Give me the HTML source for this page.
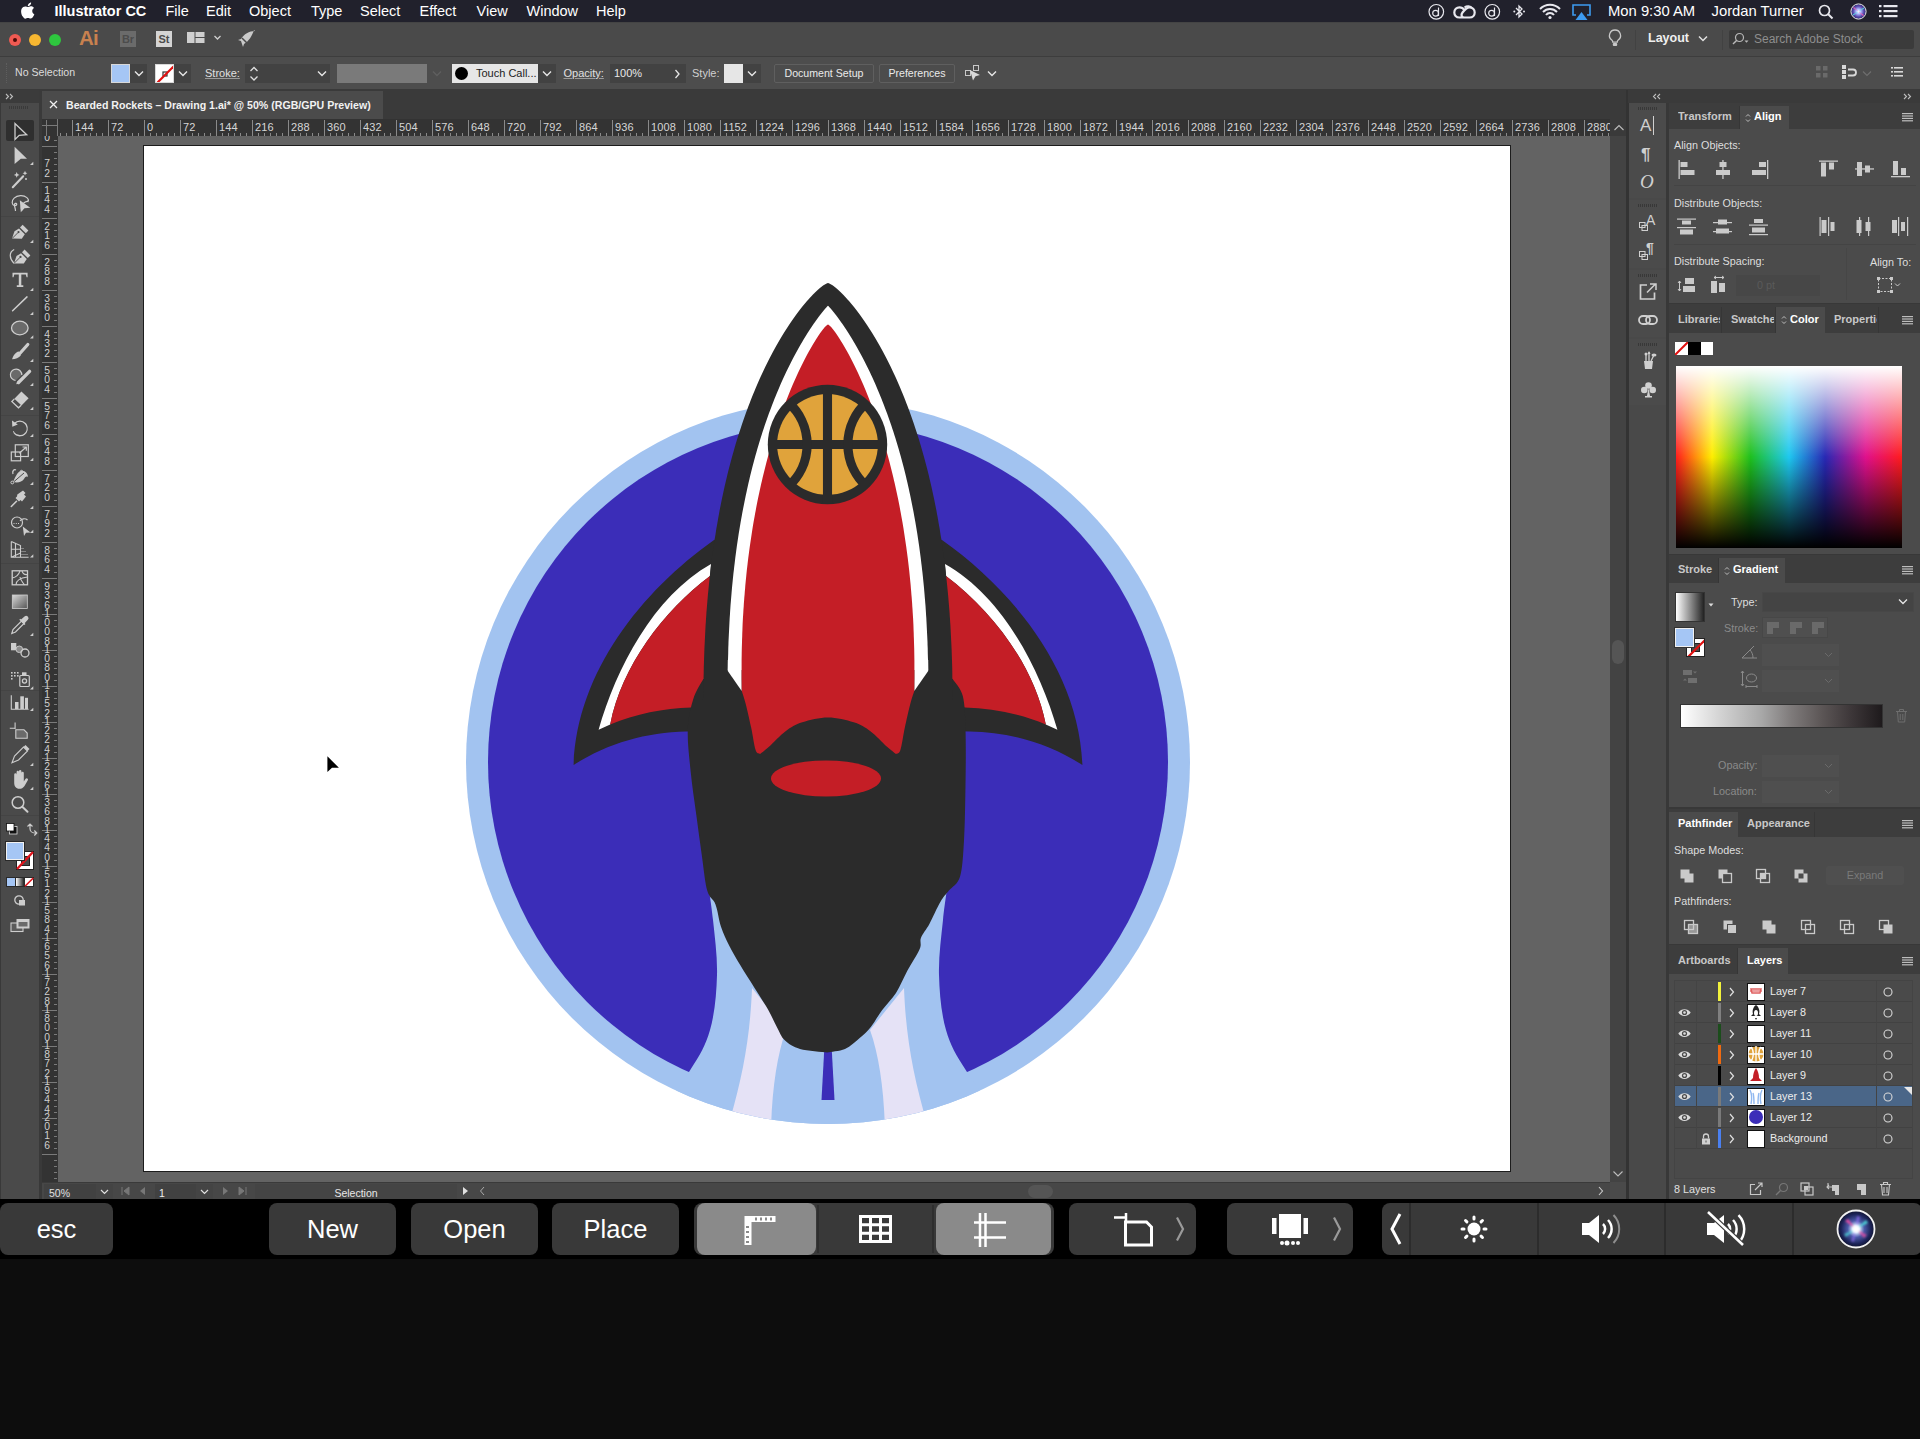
<!DOCTYPE html>
<html><head><meta charset="utf-8"><title>Illustrator</title>
<style>

*{margin:0;padding:0;box-sizing:border-box}
html,body{width:1920px;height:1439px;overflow:hidden;background:#0d0d0d;font-family:"Liberation Sans",sans-serif;position:relative}
.a{position:absolute}
svg{position:absolute;overflow:visible}

.mb{top:0;height:22px;line-height:22px;font-size:14.5px;color:#fff;white-space:nowrap}

.cb{line-height:14px;white-space:nowrap}
.dd{background:#424242}
.btn{border:1px solid #5f5f5f;border-radius:2px;background:#4c4c4c;color:#eaeaea;font-size:10.6px;line-height:17px;text-align:center;white-space:nowrap}

.rl{top:121px;font-size:11px;line-height:13px;color:#d6d6d6;white-space:nowrap;letter-spacing:0.1px}
.vl{left:43px;width:8px;text-align:center;font-size:10.3px;line-height:9.5px;color:#d0d0d0}

.pt{font-size:10.8px;line-height:13px;color:#dedede;white-space:nowrap}
.tab{font-size:11px;line-height:13px;font-weight:bold;white-space:nowrap}

.sb{top:1186.5px;font-size:10.5px;line-height:13px;color:#e0e0e0;white-space:nowrap}

.tb{top:1203px;height:52px;border-radius:8px;color:#fff;font-size:25.5px;line-height:52px;text-align:center;white-space:nowrap}

</style></head><body>
<div class="a" style="left:0;top:0;width:1920px;height:22px;background:#21212c"></div>
<div class="a mb" style="left:54.5px;font-weight:bold;">Illustrator CC</div>
<div class="a mb" style="left:165.5px;">File</div>
<div class="a mb" style="left:206px;">Edit</div>
<div class="a mb" style="left:249px;">Object</div>
<div class="a mb" style="left:311px;">Type</div>
<div class="a mb" style="left:360px;">Select</div>
<div class="a mb" style="left:419.5px;">Effect</div>
<div class="a mb" style="left:476.5px;">View</div>
<div class="a mb" style="left:526.5px;">Window</div>
<div class="a mb" style="left:596px;">Help</div>
<div class="a mb" style="left:1608px;font-size:14.8px">Mon 9:30 AM</div>
<div class="a mb" style="left:1711.5px;font-size:14.8px">Jordan Turner</div>
<svg style="left:20px;top:2px" width="15" height="17" viewBox="0 0 15 17"><path d="M12.2 9.1c0-2 1.7-3 1.8-3.1-1-1.4-2.5-1.6-3-1.7-1.3-.1-2.5.8-3.1.8-.7 0-1.7-.8-2.7-.7C3.800 4.400 2.500 5.200 1.800 6.400.4 8.900 1.400 12.600 2.800 14.600c.7 1 1.500 2.100 2.500 2.100 1 0 1.400-.7 2.700-.7s1.600.7 2.700.6c1.100 0 1.800-1 2.500-2 .8-1.100 1.100-2.200 1.100-2.300-.1 0-2.100-.8-2.100-3.200zM10.200 3.100c.6-.7 1-1.600.9-2.600-.8 0-1.800.6-2.400 1.300-.5.6-1 1.600-.9 2.500.9.1 1.800-.5 2.400-1.200z" fill="#fff"/></svg>
<svg style="left:1428px;top:4px" width="17" height="16"><circle cx="8.3" cy="7.8" r="7.3" fill="none" stroke="#e8e8ee" stroke-width="1.2"/><circle cx="7.6" cy="9.2" r="2.9" fill="none" stroke="#e8e8ee" stroke-width="1.2"/><path d="M10.5 3.5v8.5" stroke="#e8e8ee" stroke-width="1.2"/></svg>
<svg style="left:1453px;top:4px" width="23" height="16"><path d="M6.500 13.500C3 13.500 1.300 11 1.300 8.500 1.300 5.500 3.500 3.300 6.500 3.300 9.500 3.300 11.500 6 11.500 6M16.500 13.500C20 13.500 21.700 11 21.700 8.500 21.700 5.500 19.500 3.300 16.500 3.300 13.500 3.300 11 6.500 9.500 8.500 8 10.500 8 13.500 11.500 13.500H16.500M6.500 13.500H11.500" fill="none" stroke="#e8e8ee" stroke-width="2.200"/><path d="M11.500 3.500C14 1.500 17.500 2 19 4" fill="none" stroke="#e8e8ee" stroke-width="2"/></svg>
<svg style="left:1484px;top:4px" width="17" height="16"><circle cx="8.3" cy="7.8" r="7.3" fill="none" stroke="#e8e8ee" stroke-width="1.2"/><circle cx="7.6" cy="9.2" r="2.9" fill="none" stroke="#e8e8ee" stroke-width="1.2"/><path d="M10.5 3.5v8.5" stroke="#e8e8ee" stroke-width="1.2"/></svg>
<svg style="left:1513px;top:3px" width="13" height="17"><path d="M3 5l6 6-3 3V3l3 3-6 6" fill="none" stroke="#e8e8ee" stroke-width="1.3"/><circle cx="1.3" cy="8.5" r="1" fill="#e8e8ee"/><circle cx="11" cy="8.500" r="1" fill="#e8e8ee"/></svg>
<svg style="left:1539px;top:3px" width="22" height="16"><path d="M1 6a14 14 0 0 1 20 0M4 9a9.500 9.500 0 0 1 14 0M7 12a5 5 0 0 1 8 0" fill="none" stroke="#e8e8ee" stroke-width="2"/><circle cx="11" cy="14.500" r="1.600" fill="#e8e8ee"/></svg>
<svg style="left:1572px;top:4px" width="19" height="16"><path d="M4 11H1V1h17v10h-3" fill="none" stroke="#3d9bf0" stroke-width="1.6"/><path d="M9.5 8l6 8h-12z" fill="#3d9bf0"/></svg>
<svg style="left:1818px;top:4px" width="16" height="16"><circle cx="6.500" cy="6.500" r="5" fill="none" stroke="#e8e8ee" stroke-width="1.700"/><path d="M10 10l4.500 4.500" stroke="#e8e8ee" stroke-width="2"/></svg>
<svg style="left:1850px;top:3px" width="17" height="17"><defs><radialGradient id="sg" cx="50%" cy="50%" r="50%"><stop offset="0" stop-color="#fff"/><stop offset=".3" stop-color="#b0c0ff"/><stop offset=".7" stop-color="#5a48b0"/><stop offset="1" stop-color="#30306a"/></radialGradient></defs><circle cx="8.5" cy="8.5" r="7.6" fill="url(#sg)" stroke="#e8e8e8" stroke-width="1"/><path d="M8.5 8.5L3 5 4 4zM8.5 8.5L14 12 13 13z" fill="#ff5fb0" opacity=".8"/><path d="M8.5 8.5L13.5 4.500 14.500 5.500zM8.5 8.5L3.500 12.500 2.500 11.500z" fill="#50e8e0" opacity=".8"/></svg>
<svg style="left:1879px;top:4px" width="19" height="15"><g fill="#e8e8ee"><rect x="0" y="1" width="2.500" height="2.200"/><rect x="0" y="6" width="2.500" height="2.200"/><rect x="0" y="11" width="2.500" height="2.200"/><rect x="4.500" y="1" width="14" height="2.200"/><rect x="4.500" y="6" width="14" height="2.200"/><rect x="4.500" y="11" width="14" height="2.200"/></g></svg><div class="a" style="left:0;top:22px;width:1920px;height:34px;background:#4a4a4a;border-top:1px solid #444"></div>
<div class="a" style="left:8.7px;top:33.7px;width:12.6px;height:12.6px;border-radius:50%;background:#f05a52"></div>
<div class="a" style="left:13px;top:38px;width:4px;height:4px;border-radius:50%;background:#4a0a08"></div>
<div class="a" style="left:28.7px;top:33.7px;width:12.6px;height:12.6px;border-radius:50%;background:#f7b731"></div>
<div class="a" style="left:48.7px;top:33.7px;width:12.6px;height:12.6px;border-radius:50%;background:#2ec63e"></div>
<div class="a" style="left:79px;top:26px;font-size:20.5px;line-height:24px;font-weight:bold;color:#c8814f;letter-spacing:-0.8px">Ai</div>
<div class="a" style="left:120px;top:31px;width:16px;height:16px;background:#6b6b6b;color:#4c4c4c;font-size:11px;font-weight:bold;line-height:16px;text-align:center">Br</div>
<div class="a" style="left:156px;top:31px;width:16px;height:16px;background:#d4d4d4;color:#4c4c4c;font-size:11px;font-weight:bold;line-height:16px;text-align:center">St</div>
<svg style="left:187px;top:32px" width="35" height="12"><g fill="#cfcfcf"><rect x="0" y="0" width="7.500" height="11"/><rect x="8.500" y="0" width="9" height="5"/><rect x="8.500" y="6" width="9" height="5"/></g><path d="M27.500 4l3 3 3-3" fill="none" stroke="#cfcfcf" stroke-width="1.300"/></svg>
<svg style="left:237px;top:30px" width="19" height="18"><path d="M18 1C12 1 7 4 4 9l-3 1 3 1 1 3 1 3 1-3c5-3 8-8 10-14z" fill="#c9c9c9"/><path d="M5 8l6 6" stroke="#4a4a4a" stroke-width="1.500"/></svg>
<svg style="left:1608px;top:29px" width="14" height="19"><path d="M7 1a5.500 5.500 0 0 0-3.200 10c.7.600 1 1.300 1 2.200h4.400c0-.9.300-1.600 1-2.200A5.500 5.500 0 0 0 7 1z" fill="none" stroke="#c8c8c8" stroke-width="1.300"/><rect x="4.800" y="14" width="4.400" height="3" rx="1" fill="#c8c8c8"/></svg>
<div class="a" style="left:1635px;top:30px;width:1px;height:20px;background:#424242"></div>
<div class="a" style="left:1648px;top:30px;font-size:12.5px;line-height:16px;font-weight:bold;color:#efefef">Layout</div>
<svg style="left:1698px;top:35px" width="10" height="7"><path d="M1 1.500l4 4 4-4" fill="none" stroke="#e0e0e0" stroke-width="1.500"/></svg>
<div class="a" style="left:1722px;top:30px;width:1px;height:20px;background:#424242"></div>
<div class="a" style="left:1729px;top:29.5px;width:185px;height:19px;background:#3b3b3b;border-radius:2px"></div>
<svg style="left:1732px;top:32px" width="18" height="14"><circle cx="7.500" cy="5.500" r="4" fill="none" stroke="#b8b8b8" stroke-width="1.200"/><path d="M4.800 8.300L1 12" stroke="#b8b8b8" stroke-width="1.500"/><path d="M12.500 8.500h4l-2 2.200z" fill="#b8b8b8"/></svg>
<div class="a" style="left:1754px;top:31px;font-size:12px;line-height:16px;color:#8e8e8e">Search Adobe Stock</div><div class="a" style="left:0;top:56px;width:1920px;height:34px;background:#4d4d4d;border-top:1px solid #3d3d3d;border-bottom:1px solid #3a3a3a"></div>
<div class="a" style="left:6px;top:63px;width:1px;height:20px;border-left:1px dotted #5e5e5e"></div>
<div class="a cb" style="left:15px;top:65px;font-size:10.6px;color:#dcdcdc">No Selection</div>
<div class="a" style="left:111px;top:64px;width:19px;height:19px;background:#a5c6f5;border:1px solid #d8d8d8"></div>
<div class="a dd" style="left:130px;top:64px;width:17px;height:19px"></div>
<svg style="left:134px;top:70px" width="10" height="7"><path d="M1 1.500l4 4 4-4" fill="none" stroke="#e6e6e6" stroke-width="1.400"/></svg>
<div class="a" style="left:155px;top:64px;width:19px;height:19px;background:#fff;border:1px solid #d8d8d8;overflow:hidden"><svg style="left:0;top:0" width="19" height="19"><rect x="7" y="7" width="4" height="4" fill="none" stroke="#333" stroke-width="1.200"/><path d="M1.500 17.500L17.500 1.500" stroke="#e01010" stroke-width="2.200"/></svg></div>
<div class="a dd" style="left:174px;top:64px;width:17px;height:19px"></div>
<svg style="left:178px;top:70px" width="10" height="7"><path d="M1 1.500l4 4 4-4" fill="none" stroke="#e6e6e6" stroke-width="1.400"/></svg>
<div class="a cb" style="left:205px;top:66px;font-size:11px;color:#e0e0e0;text-decoration:underline;text-decoration-color:#9a9a9a">Stroke:</div>
<div class="a dd" style="left:245px;top:64px;width:18px;height:19px"></div>
<svg style="left:249px;top:66px" width="10" height="16"><path d="M1.500 5l3.500-3.500 3.500 3.500M1.500 10.500l3.500 3.500 3.500-3.500" fill="none" stroke="#dedede" stroke-width="1.300"/></svg>
<div class="a" style="left:263px;top:64px;width:50px;height:19px;background:#424242"></div>
<div class="a dd" style="left:313px;top:64px;width:17px;height:19px"></div>
<svg style="left:317px;top:70px" width="10" height="7"><path d="M1 1.500l4 4 4-4" fill="none" stroke="#e6e6e6" stroke-width="1.400"/></svg>
<div class="a" style="left:337px;top:64px;width:90px;height:19px;background:#7a7a7a"></div>
<svg style="left:432px;top:70px" width="10" height="7"><path d="M1 1.500l4 4 4-4" fill="none" stroke="#5f5f5f" stroke-width="1.400"/></svg>
<div class="a" style="left:452px;top:64px;width:86px;height:19px;background:#e6e6e6"></div>
<div class="a" style="left:455px;top:67px;width:13px;height:13px;border-radius:50%;background:#000"></div>
<div class="a cb" style="left:476px;top:66px;font-size:11px;color:#222">Touch Call...</div>
<div class="a dd" style="left:538px;top:64px;width:18px;height:19px"></div>
<svg style="left:542px;top:70px" width="10" height="7"><path d="M1 1.500l4 4 4-4" fill="none" stroke="#e6e6e6" stroke-width="1.400"/></svg>
<div class="a cb" style="left:563.5px;top:66px;font-size:11px;color:#e0e0e0;text-decoration:underline;text-decoration-color:#9a9a9a">Opacity:</div>
<div class="a" style="left:610px;top:64px;width:58px;height:19px;background:#424242"></div>
<div class="a cb" style="left:614px;top:66px;font-size:11px;color:#e8e8e8">100%</div>
<div class="a dd" style="left:668px;top:64px;width:18px;height:19px"></div>
<svg style="left:674px;top:69px" width="7" height="10"><path d="M1.500 1l3.500 4-3.500 4" fill="none" stroke="#e6e6e6" stroke-width="1.300"/></svg>
<div class="a cb" style="left:692px;top:66px;font-size:11px;color:#d0d0d0">Style:</div>
<div class="a" style="left:724px;top:64px;width:19px;height:19px;background:#e6e6e6"></div>
<div class="a dd" style="left:743px;top:64px;width:18px;height:19px"></div>
<svg style="left:747px;top:70px" width="10" height="7"><path d="M1 1.500l4 4 4-4" fill="none" stroke="#e6e6e6" stroke-width="1.400"/></svg>
<div class="a btn" style="left:774px;top:64px;width:100px;height:19px">Document Setup</div>
<div class="a btn" style="left:879px;top:64px;width:76px;height:19px">Preferences</div>
<svg style="left:964px;top:64px" width="20" height="18"><g fill="none" stroke="#c8c8c8" stroke-width="1"><rect x="1.500" y="6.500" width="5" height="5"/><rect x="9.500" y="1.500" width="5" height="5"/></g><path d="M6 6l10 5-4.500 1.200L9 16.500z" fill="#d8d8d8"/></svg>
<svg style="left:987px;top:70px" width="10" height="7"><path d="M1 1.500l4 4 4-4" fill="none" stroke="#e6e6e6" stroke-width="1.400"/></svg>
<svg style="left:1816px;top:66px" width="12" height="12"><g fill="#6a6a6a"><rect x="0" y="0" width="4.500" height="4.500"/><rect x="7" y="0" width="4.500" height="4.500"/><rect x="0" y="7" width="4.500" height="4.500"/><rect x="7" y="7" width="4.500" height="4.500"/></g></svg>
<svg style="left:1842px;top:65px" width="16" height="15"><g fill="#d8d8d8"><rect x="0" y="0" width="4" height="4"/><rect x="0" y="5" width="4" height="4"/><rect x="0" y="10" width="4" height="4"/></g><path d="M6 4.500h5a3 3 0 0 1 0 6H6" fill="none" stroke="#d8d8d8" stroke-width="1.800"/></svg>
<svg style="left:1862px;top:70px" width="10" height="7"><path d="M1 1.500l4 4 4-4" fill="none" stroke="#6e6e6e" stroke-width="1.200"/></svg>
<svg style="left:1891px;top:67px" width="12" height="11"><g fill="#d8d8d8"><rect x="0" y="0" width="2" height="1.600"/><rect x="0" y="4" width="2" height="1.600"/><rect x="0" y="8" width="2" height="1.600"/><rect x="3" y="0" width="9" height="1.600"/><rect x="3" y="4" width="9" height="1.600"/><rect x="3" y="8" width="9" height="1.600"/></g></svg><div class="a" style="left:0;top:90px;width:42px;height:1110px;background:#393939"></div>
<div class="a" style="left:0;top:90px;width:39px;height:13px;background:#3b3b3b"></div>
<svg style="left:5px;top:93px" width="10" height="7"><path d="M1 1l2.500 2.500L1 6M5 1l2.500 2.500L5 6" fill="none" stroke="#bdbdbd" stroke-width="1.100"/></svg>
<div class="a" style="left:1px;top:103px;width:38px;height:1097px;background:#4a4a4a"></div>
<div class="a" style="left:9px;top:106px;width:20px;height:3px;background:repeating-linear-gradient(90deg,#3a3a3a 0 1px,transparent 1px 2px)"></div>
<div class="a" style="left:6px;top:120px;width:28px;height:21px;background:#2f2f2f;border-radius:2px"></div>
<svg style="left:0;top:0" width="42" height="1200"><path d="M15 123.500V139.500L19.200 135.300 26.700 134.700Z" fill="none" stroke="#cdcdcd" stroke-width="1.300" stroke-linejoin="miter"/><path d="M14.600 146.800V164L20.800 158.750H27Z" fill="#cdcdcd"/><path d="M33.3 165h-3.300l3.300-3.300z" fill="#cdcdcd"/><path d="M12.800 187.200L23.200 176.300" stroke="#cdcdcd" stroke-width="2.100" stroke-linecap="round"/><path d="M16.7 172.1L17.54 174.06 19.5 174.9 17.54 175.74 16.7 177.70000000000002 15.86 175.74 13.899999999999999 174.9 15.86 174.06Z" fill="#cdcdcd"/><path d="M25 170.79999999999998L25.72 172.48 27.4 173.2 25.72 173.92 25 175.6 24.28 173.92 22.6 173.2 24.28 172.48Z" fill="#cdcdcd"/><circle cx="26" cy="179" r="1" fill="#cdcdcd"/><path d="M22 210.500C19 204 27 200.500 28 201.500 29.500 199 26 195.500 20.500 195.700 15 196 11.800 199.500 12.200 202.800 12.600 206 15.500 206 16.500 205 17.500 203.500 15.200 202.500 14.500 204.200 13.800 206 15.800 208.500 15.500 211" fill="none" stroke="#cdcdcd" stroke-width="1.200"/><path d="M19.800 200.300L30.300 207.700 24.500 208.200 20.800 212.300Z" fill="#cdcdcd"/><g transform="translate(0 0)"><path d="M12 238.600L14.500 231.300 19 228.400 24.800 234.200 21.800 238.700Z" fill="#cdcdcd"/><path d="M20 227.400L22.600 224.800 28.400 230.600 25.800 233.200Z" fill="#cdcdcd"/><path d="M12.300 238.300L18 232.600" stroke="#4a4a4a" stroke-width="0.900"/><circle cx="18.500" cy="232.100" r="1.100" fill="#4a4a4a"/></g><path d="M33.3 243h-3.300l3.300-3.300z" fill="#cdcdcd"/><g transform="translate(2 24.8)"><path d="M12 238.600L14.500 231.300 19 228.400 24.800 234.200 21.800 238.700Z" fill="#cdcdcd"/><path d="M20 227.400L22.600 224.800 28.400 230.600 25.800 233.200Z" fill="#cdcdcd"/><path d="M12.300 238.300L18 232.600" stroke="#4a4a4a" stroke-width="0.900"/><circle cx="18.500" cy="232.100" r="1.100" fill="#4a4a4a"/></g><path d="M14.200 249.500C9 252 9 258 14 263.300" fill="none" stroke="#cdcdcd" stroke-width="1.200"/><path d="M12.500 272.800H27.600V277.300H26.600L25.800 274.600H21.300V285.300H23.300V286.900H16.800V285.300H18.800V274.600H14.300L13.500 277.300H12.500Z" fill="#cdcdcd"/><path d="M33.3 291h-3.300l3.300-3.300z" fill="#cdcdcd"/><path d="M12.600 310.700L27 296.900" stroke="#cdcdcd" stroke-width="1.500" stroke-linecap="round"/><path d="M33.3 315h-3.300l3.300-3.300z" fill="#cdcdcd"/><ellipse cx="19.800" cy="328" rx="8.300" ry="6.800" fill="#6a6a6a" stroke="#cdcdcd" stroke-width="1.300"/><path d="M33.3 338.5h-3.300l3.300-3.300z" fill="#cdcdcd"/><path d="M27.800 344.500L19.800 353.500" stroke="#cdcdcd" stroke-width="3.200" stroke-linecap="round"/><path d="M18.800 351.500C15.500 352 13.300 355.500 12 359.300 15.500 359 19 358 20.800 355.500Z" fill="#cdcdcd"/><path d="M33.3 362h-3.300l3.300-3.300z" fill="#cdcdcd"/><path d="M15.500 380.500A5.700 5.700 0 1 1 21.800 375" fill="#6a6a6a" stroke="#cdcdcd" stroke-width="1.200"/><path d="M29.600 371.300L18.500 382.500" stroke="#cdcdcd" stroke-width="3.300" stroke-linecap="round"/><path d="M17.300 381.300L16.200 384.300 19 383.500Z" fill="#cdcdcd"/><path d="M33.3 386h-3.300l3.300-3.300z" fill="#cdcdcd"/><path d="M21.400 391.600L28.600 398.300 21.500 405.500 14.400 398.800Z" fill="#cdcdcd"/><path d="M14.400 398.800L11.800 401.500 18.500 407.800 21.200 405.200" fill="none" stroke="#cdcdcd" stroke-width="1.200"/><path d="M33.3 410h-3.300l3.300-3.300z" fill="#cdcdcd"/><path d="M14.500 423.500A7.300 7.300 0 1 1 13.800 432.500" fill="none" stroke="#cdcdcd" stroke-width="1.300" stroke-dasharray="14 0"/><path d="M13.800 432.500A7.300 7.300 0 0 1 13.500 431" fill="none" stroke="#cdcdcd"/><path d="M12 420.500L17.800 424.500 12.300 426.800Z" fill="#cdcdcd"/><path d="M33.3 437h-3.300l3.300-3.300z" fill="#cdcdcd"/><rect x="11.300" y="452" width="9.300" height="8.800" fill="none" stroke="#cdcdcd" stroke-width="1.200"/><rect x="15.300" y="444.800" width="13" height="11.700" fill="none" stroke="#cdcdcd" stroke-width="1.200"/><path d="M19.300 453.300L26 447.300M22.500 447H26.300V450.800" fill="none" stroke="#cdcdcd" stroke-width="1.200"/><path d="M33.3 461h-3.300l3.300-3.300z" fill="#cdcdcd"/><path d="M13 482C15 478 17 472 21 471 25 470 28 474 28 477 26 476 25 477 24 479 22 482 18 483 13 482Z" fill="#cdcdcd"/><path d="M13 474C12 471 14 469 16 470" fill="none" stroke="#cdcdcd" stroke-width="1.300"/><path d="M11.800 483.500L24 473" stroke="#4a4a4a" stroke-width="1"/><circle cx="12.300" cy="482.500" r="1.400" fill="none" stroke="#cdcdcd" stroke-width="1"/><circle cx="21.500" cy="471.500" r="1.200" fill="none" stroke="#cdcdcd" stroke-width="1"/><path d="M33.3 485h-3.300l3.300-3.300z" fill="#cdcdcd"/><path d="M17.300 494.500L23 490.500 25.500 493 24 494.500 26 496.500 22 501.500 20.500 500 19 501.500 15.500 498 17 496.500Z" fill="#cdcdcd"/><path d="M11.300 506.500L16.500 501.300" stroke="#cdcdcd" stroke-width="1.600" stroke-linecap="round"/><path d="M33.3 509h-3.300l3.300-3.300z" fill="#cdcdcd"/><circle cx="17" cy="522.500" r="5.500" fill="none" stroke="#cdcdcd" stroke-width="1.200"/><path d="M20 521A5 5 0 0 1 27.500 520" fill="none" stroke="#cdcdcd" stroke-width="1.200"/><path d="M13.500 523.500h1M15.800 523.500h1M18 523.500h1" stroke="#cdcdcd" stroke-width="1"/><path d="M22.800 526.500L30.500 532.500 26 532.800 24 536Z" fill="#cdcdcd"/><path d="M33.3 533h-3.300l3.300-3.300z" fill="#cdcdcd"/><path d="M11.300 541.500V557.300H28.600M11.300 541.500L20.500 545.500V557.300M11.300 549.300H20.500M15.500 543V557M11.300 557.300L20.500 553" fill="none" stroke="#cdcdcd" stroke-width="1.100"/><path d="M21 548.500H24M21 551.500H26M21 554.500H28" stroke="#8a8a8a" stroke-width="0.900"/><path d="M33.3 557.5h-3.300l3.300-3.300z" fill="#cdcdcd"/><rect x="12.200" y="570.800" width="15.300" height="14" fill="none" stroke="#cdcdcd" stroke-width="1.300"/><path d="M12.200 578C17 577 19 574 20 570.800M16 584.800C16 580 20 578 27.500 577M20 577C20.500 580 23 583 24.500 584.800M22 571C23 574 25 575 27.500 574.500" fill="none" stroke="#cdcdcd" stroke-width="1.100"/><defs><linearGradient id="tg" x1="0" x2="1" y1="0" y2="1"><stop offset="0" stop-color="#d8d8d8"/><stop offset="1" stop-color="#555"/></linearGradient></defs><rect x="12.300" y="595" width="15" height="13.500" fill="url(#tg)" stroke="#cfcfcf" stroke-width="0.800"/><path d="M11.800 633.500L13 629.500 21.500 621 24 623.500 15.500 632Z" fill="none" stroke="#cdcdcd" stroke-width="1.200"/><path d="M20.500 620L24.500 616.500A2.200 2.200 0 0 1 27.800 619.800L24.200 623.800Z" fill="#cdcdcd"/><path d="M19.800 619.300L25 624.500" stroke="#cdcdcd" stroke-width="1.300"/><path d="M33.3 636h-3.300l3.300-3.300z" fill="#cdcdcd"/><rect x="11" y="643" width="5.300" height="7.300" fill="#cdcdcd"/><circle cx="19.300" cy="649.300" r="3.300" fill="#8a8a8a" stroke="#cdcdcd" stroke-width="0.900"/><circle cx="25" cy="653" r="4" fill="none" stroke="#cdcdcd" stroke-width="1.300"/><rect x="11" y="672" width="1.600" height="1.600" fill="#cdcdcd"/><rect x="11" y="675" width="1.600" height="1.600" fill="#cdcdcd"/><rect x="14" y="672" width="1.600" height="1.600" fill="#cdcdcd"/><rect x="14" y="675" width="1.600" height="1.600" fill="#cdcdcd"/><rect x="17" y="672" width="1.600" height="1.600" fill="#cdcdcd"/><rect x="17" y="675" width="1.600" height="1.600" fill="#cdcdcd"/><rect x="11" y="678" width="1.600" height="1.600" fill="#cdcdcd"/><rect x="19.800" y="675.500" width="9.500" height="11" rx="1" fill="none" stroke="#cdcdcd" stroke-width="1.200"/><circle cx="24.500" cy="681" r="2.100" fill="none" stroke="#cdcdcd" stroke-width="1.300"/><rect x="22" y="672.300" width="4.500" height="3" fill="#cdcdcd"/><path d="M33.3 689.5h-3.300l3.300-3.300z" fill="#cdcdcd"/><path d="M11.300 695.200V709.300H28.600" fill="none" stroke="#cdcdcd" stroke-width="1.100"/><rect x="15" y="702" width="3.500" height="7" fill="#cdcdcd"/><rect x="20.300" y="696.300" width="3.600" height="12.700" fill="#cdcdcd"/><rect x="25" y="697.800" width="3" height="11.200" fill="#cdcdcd"/><path d="M33.3 711h-3.300l3.300-3.300z" fill="#cdcdcd"/><path d="M15.100 722.500V729M9.800 728.200H15.600" stroke="#cdcdcd" stroke-width="1.100"/><path d="M15.800 729.800H24L27.200 733V738.300H15.800Z" fill="#6a6a6a" stroke="#cdcdcd" stroke-width="1.100"/><path d="M12 762.800L14.500 756 23.500 747 27.500 751 18.500 760Z" fill="none" stroke="#cdcdcd" stroke-width="1.100"/><path d="M23.500 747L25.500 745 29.500 749 27.500 751Z" fill="#cdcdcd"/><path d="M33.3 766h-3.300l3.300-3.300z" fill="#cdcdcd"/><path d="M14.200 781V774.500A1.200 1.200 0 0 1 16.600 774.500V779.500 772A1.200 1.200 0 0 1 19 772V779 771.300A1.200 1.200 0 0 1 21.400 771.300V779 773A1.200 1.200 0 0 1 23.800 773V781.500L25.600 778.800A1.300 1.300 0 0 1 27.800 780.200L24.500 786C23 788 21.500 788.800 19.300 788.800 16 788.800 14.200 786 14.200 783Z" fill="#cdcdcd"/><path d="M33.3 790h-3.300l3.300-3.300z" fill="#cdcdcd"/><circle cx="18" cy="802.500" r="5.800" fill="none" stroke="#cdcdcd" stroke-width="1.500"/><path d="M22.300 806.800L27.500 811.800" stroke="#cdcdcd" stroke-width="2" stroke-linecap="round"/></svg>
<svg style="left:5px;top:822px" width="34" height="15"><rect x="4.500" y="4.500" width="7.500" height="7.500" fill="#111" stroke="#ddd" stroke-width="0.800"/><rect x="1.500" y="1.500" width="7.500" height="7.500" fill="#fff" stroke="#111" stroke-width="0.800"/><path d="M22.500 4.500L25 2 27.500 4.500M25 2.300V6.500C25 9 27 11 29.500 11H31.500M29.300 8.500L31.800 11 29.300 13.500" fill="none" stroke="#cdcdcd" stroke-width="1.200"/></svg>
<div class="a" style="left:16px;top:851px;width:18px;height:19px;background:#fff;border:1px solid #222"></div>
<div class="a" style="left:20.500px;top:855.500px;width:9px;height:10px;background:#4a4a4a;border:1px solid #222"></div>
<svg style="left:16px;top:851px" width="18" height="19"><path d="M1 18L17 1" stroke="#e0141c" stroke-width="2.400"/></svg>
<div class="a" style="left:6px;top:842px;width:18px;height:18px;background:#a5c6f5;border:1px solid #f2f2f2;outline:1px solid #2a2a2a"></div>
<div class="a" style="left:7px;top:877.500px;width:7.600px;height:8.300px;background:#a5c6f5;outline:1px solid #2a2a2a"></div>
<div class="a" style="left:16px;top:877.500px;width:7.600px;height:8.300px;background:linear-gradient(90deg,#fff,#222);outline:1px solid #2a2a2a"></div>
<div class="a" style="left:25px;top:877.500px;width:8.300px;height:8.300px;background:#fff;outline:1px solid #2a2a2a"></div>
<svg style="left:25px;top:877.500px" width="9" height="9"><path d="M0 8.300L8.300 0" stroke="#e0141c" stroke-width="1.600"/></svg>
<svg style="left:14px;top:895px" width="12" height="11"><circle cx="5" cy="5" r="4.200" fill="none" stroke="#cdcdcd" stroke-width="1.300"/><rect x="5" y="5" width="6" height="5.500" fill="#cdcdcd"/></svg>
<svg style="left:10px;top:918px" width="21" height="15"><rect x="1" y="5" width="12" height="8.500" fill="#5a5a5a" stroke="#cdcdcd" stroke-width="1.100"/><rect x="6.500" y="1" width="13" height="9.500" fill="#cdcdcd"/><rect x="8.500" y="4" width="9" height="4.500" fill="#6a6a6a"/></svg>
<div class="a" style="left:1px;top:216px;width:38px;height:1px;background:#444"></div>
<div class="a" style="left:1px;top:415px;width:38px;height:1px;background:#444"></div>
<div class="a" style="left:1px;top:563px;width:38px;height:1px;background:#444"></div>
<div class="a" style="left:1px;top:690px;width:38px;height:1px;background:#444"></div>
<div class="a" style="left:1px;top:815px;width:38px;height:1px;background:#444"></div><div class="a" style="left:39px;top:90px;width:1589px;height:29px;background:#3a3a3a"></div>
<div class="a" style="left:42px;top:91px;width:341px;height:28px;background:#4b4b4b"></div>
<svg style="left:49px;top:100px" width="9" height="9"><path d="M1 1l7 7M8 1L1 8" stroke="#f0f0f0" stroke-width="1.300"/></svg>
<div class="a" style="left:66px;top:98px;font-size:10.6px;line-height:14px;font-weight:bold;color:#f2f2f2;white-space:nowrap">Bearded Rockets – Drawing 1.ai* @ 50% (RGB/GPU Preview)</div>
<div class="a" style="left:42px;top:119px;width:1584px;height:17px;background:#333"></div>
<svg style="left:0;top:0" width="1920" height="140"><path d="M60.5 133V136 M66.5 133V136 M72.5 120V136 M78.5 133V136 M84.5 133V136 M90.5 133V136 M96.5 133V136 M102.5 133V136 M108.5 120V136 M114.5 133V136 M120.5 133V136 M126.5 133V136 M132.5 133V136 M138.5 133V136 M144.5 120V136 M150.5 133V136 M156.5 133V136 M162.5 133V136 M168.5 133V136 M174.5 133V136 M180.5 120V136 M186.5 133V136 M192.5 133V136 M198.5 133V136 M204.5 133V136 M210.5 133V136 M216.5 120V136 M222.5 133V136 M228.5 133V136 M234.5 133V136 M240.5 133V136 M246.5 133V136 M252.5 120V136 M258.5 133V136 M264.5 133V136 M270.5 133V136 M276.5 133V136 M282.5 133V136 M288.5 120V136 M294.5 133V136 M300.5 133V136 M306.5 133V136 M312.5 133V136 M318.5 133V136 M324.5 120V136 M330.5 133V136 M336.5 133V136 M342.5 133V136 M348.5 133V136 M354.5 133V136 M360.5 120V136 M366.5 133V136 M372.5 133V136 M378.5 133V136 M384.5 133V136 M390.5 133V136 M396.5 120V136 M402.5 133V136 M408.5 133V136 M414.5 133V136 M420.5 133V136 M426.5 133V136 M432.5 120V136 M438.5 133V136 M444.5 133V136 M450.5 133V136 M456.5 133V136 M462.5 133V136 M468.5 120V136 M474.5 133V136 M480.5 133V136 M486.5 133V136 M492.5 133V136 M498.5 133V136 M504.5 120V136 M510.5 133V136 M516.5 133V136 M522.5 133V136 M528.5 133V136 M534.5 133V136 M540.5 120V136 M546.5 133V136 M552.5 133V136 M558.5 133V136 M564.5 133V136 M570.5 133V136 M576.5 120V136 M582.5 133V136 M588.5 133V136 M594.5 133V136 M600.5 133V136 M606.5 133V136 M612.5 120V136 M618.5 133V136 M624.5 133V136 M630.5 133V136 M636.5 133V136 M642.5 133V136 M648.5 120V136 M654.5 133V136 M660.5 133V136 M666.5 133V136 M672.5 133V136 M678.5 133V136 M684.5 120V136 M690.5 133V136 M696.5 133V136 M702.5 133V136 M708.5 133V136 M714.5 133V136 M720.5 120V136 M726.5 133V136 M732.5 133V136 M738.5 133V136 M744.5 133V136 M750.5 133V136 M756.5 120V136 M762.5 133V136 M768.5 133V136 M774.5 133V136 M780.5 133V136 M786.5 133V136 M792.5 120V136 M798.5 133V136 M804.5 133V136 M810.5 133V136 M816.5 133V136 M822.5 133V136 M828.5 120V136 M834.5 133V136 M840.5 133V136 M846.5 133V136 M852.5 133V136 M858.5 133V136 M864.5 120V136 M870.5 133V136 M876.5 133V136 M882.5 133V136 M888.5 133V136 M894.5 133V136 M900.5 120V136 M906.5 133V136 M912.5 133V136 M918.5 133V136 M924.5 133V136 M930.5 133V136 M936.5 120V136 M942.5 133V136 M948.5 133V136 M954.5 133V136 M960.5 133V136 M966.5 133V136 M972.5 120V136 M978.5 133V136 M984.5 133V136 M990.5 133V136 M996.5 133V136 M1002.5 133V136 M1008.5 120V136 M1014.5 133V136 M1020.5 133V136 M1026.5 133V136 M1032.5 133V136 M1038.5 133V136 M1044.5 120V136 M1050.5 133V136 M1056.5 133V136 M1062.5 133V136 M1068.5 133V136 M1074.5 133V136 M1080.5 120V136 M1086.5 133V136 M1092.5 133V136 M1098.5 133V136 M1104.5 133V136 M1110.5 133V136 M1116.5 120V136 M1122.5 133V136 M1128.5 133V136 M1134.5 133V136 M1140.5 133V136 M1146.5 133V136 M1152.5 120V136 M1158.5 133V136 M1164.5 133V136 M1170.5 133V136 M1176.5 133V136 M1182.5 133V136 M1188.5 120V136 M1194.5 133V136 M1200.5 133V136 M1206.5 133V136 M1212.5 133V136 M1218.5 133V136 M1224.5 120V136 M1230.5 133V136 M1236.5 133V136 M1242.5 133V136 M1248.5 133V136 M1254.5 133V136 M1260.5 120V136 M1266.5 133V136 M1272.5 133V136 M1278.5 133V136 M1284.5 133V136 M1290.5 133V136 M1296.5 120V136 M1302.5 133V136 M1308.5 133V136 M1314.5 133V136 M1320.5 133V136 M1326.5 133V136 M1332.5 120V136 M1338.5 133V136 M1344.5 133V136 M1350.5 133V136 M1356.5 133V136 M1362.5 133V136 M1368.5 120V136 M1374.5 133V136 M1380.5 133V136 M1386.5 133V136 M1392.5 133V136 M1398.5 133V136 M1404.5 120V136 M1410.5 133V136 M1416.5 133V136 M1422.5 133V136 M1428.5 133V136 M1434.5 133V136 M1440.5 120V136 M1446.5 133V136 M1452.5 133V136 M1458.5 133V136 M1464.5 133V136 M1470.5 133V136 M1476.5 120V136 M1482.5 133V136 M1488.5 133V136 M1494.5 133V136 M1500.5 133V136 M1506.5 133V136 M1512.5 120V136 M1518.5 133V136 M1524.5 133V136 M1530.5 133V136 M1536.5 133V136 M1542.5 133V136 M1548.5 120V136 M1554.5 133V136 M1560.5 133V136 M1566.5 133V136 M1572.5 133V136 M1578.5 133V136 M1584.5 120V136 M1590.5 133V136 M1596.5 133V136 M1602.5 133V136 M1608.5 133V136" stroke="#8a8a8a" stroke-width="1"/><path d="M57.5 119V136M42 125.5H57M46.5 120V136" stroke="#7a7a7a" stroke-width="1"/></svg>
<div class="a" style="left:0;top:0;width:1610px;height:136px;overflow:hidden"><div class="a rl" style="left:75px">144</div><div class="a rl" style="left:111px">72</div><div class="a rl" style="left:147px">0</div><div class="a rl" style="left:183px">72</div><div class="a rl" style="left:219px">144</div><div class="a rl" style="left:255px">216</div><div class="a rl" style="left:291px">288</div><div class="a rl" style="left:327px">360</div><div class="a rl" style="left:363px">432</div><div class="a rl" style="left:399px">504</div><div class="a rl" style="left:435px">576</div><div class="a rl" style="left:471px">648</div><div class="a rl" style="left:507px">720</div><div class="a rl" style="left:543px">792</div><div class="a rl" style="left:579px">864</div><div class="a rl" style="left:615px">936</div><div class="a rl" style="left:651px">1008</div><div class="a rl" style="left:687px">1080</div><div class="a rl" style="left:723px">1152</div><div class="a rl" style="left:759px">1224</div><div class="a rl" style="left:795px">1296</div><div class="a rl" style="left:831px">1368</div><div class="a rl" style="left:867px">1440</div><div class="a rl" style="left:903px">1512</div><div class="a rl" style="left:939px">1584</div><div class="a rl" style="left:975px">1656</div><div class="a rl" style="left:1011px">1728</div><div class="a rl" style="left:1047px">1800</div><div class="a rl" style="left:1083px">1872</div><div class="a rl" style="left:1119px">1944</div><div class="a rl" style="left:1155px">2016</div><div class="a rl" style="left:1191px">2088</div><div class="a rl" style="left:1227px">2160</div><div class="a rl" style="left:1263px">2232</div><div class="a rl" style="left:1299px">2304</div><div class="a rl" style="left:1335px">2376</div><div class="a rl" style="left:1371px">2448</div><div class="a rl" style="left:1407px">2520</div><div class="a rl" style="left:1443px">2592</div><div class="a rl" style="left:1479px">2664</div><div class="a rl" style="left:1515px">2736</div><div class="a rl" style="left:1551px">2808</div><div class="a rl" style="left:1587px">2880</div></div>
<div class="a" style="left:1610px;top:119px;width:16px;height:17px;background:#3a3a3a"></div>
<svg style="left:1613px;top:124px" width="12" height="8"><path d="M1.500 6l4.500-4.500 4.500 4.500" fill="none" stroke="#bdbdbd" stroke-width="1.100"/></svg>
<div class="a" style="left:42px;top:136px;width:15.5px;height:1046px;background:#333"></div>
<svg style="left:0;top:0" width="60" height="1200"><path d="M54 140.5H57 M42 146.5H57 M54 152.5H57 M54 158.5H57 M54 164.5H57 M54 170.5H57 M54 176.5H57 M42 182.5H57 M54 188.5H57 M54 194.5H57 M54 200.5H57 M54 206.5H57 M54 212.5H57 M42 218.5H57 M54 224.5H57 M54 230.5H57 M54 236.5H57 M54 242.5H57 M54 248.5H57 M42 254.5H57 M54 260.5H57 M54 266.5H57 M54 272.5H57 M54 278.5H57 M54 284.5H57 M42 290.5H57 M54 296.5H57 M54 302.5H57 M54 308.5H57 M54 314.5H57 M54 320.5H57 M42 326.5H57 M54 332.5H57 M54 338.5H57 M54 344.5H57 M54 350.5H57 M54 356.5H57 M42 362.5H57 M54 368.5H57 M54 374.5H57 M54 380.5H57 M54 386.5H57 M54 392.5H57 M42 398.5H57 M54 404.5H57 M54 410.5H57 M54 416.5H57 M54 422.5H57 M54 428.5H57 M42 434.5H57 M54 440.5H57 M54 446.5H57 M54 452.5H57 M54 458.5H57 M54 464.5H57 M42 470.5H57 M54 476.5H57 M54 482.5H57 M54 488.5H57 M54 494.5H57 M54 500.5H57 M42 506.5H57 M54 512.5H57 M54 518.5H57 M54 524.5H57 M54 530.5H57 M54 536.5H57 M42 542.5H57 M54 548.5H57 M54 554.5H57 M54 560.5H57 M54 566.5H57 M54 572.5H57 M42 578.5H57 M54 584.5H57 M54 590.5H57 M54 596.5H57 M54 602.5H57 M54 608.5H57 M42 614.5H57 M54 620.5H57 M54 626.5H57 M54 632.5H57 M54 638.5H57 M54 644.5H57 M42 650.5H57 M54 656.5H57 M54 662.5H57 M54 668.5H57 M54 674.5H57 M54 680.5H57 M42 686.5H57 M54 692.5H57 M54 698.5H57 M54 704.5H57 M54 710.5H57 M54 716.5H57 M42 722.5H57 M54 728.5H57 M54 734.5H57 M54 740.5H57 M54 746.5H57 M54 752.5H57 M42 758.5H57 M54 764.5H57 M54 770.5H57 M54 776.5H57 M54 782.5H57 M54 788.5H57 M42 794.5H57 M54 800.5H57 M54 806.5H57 M54 812.5H57 M54 818.5H57 M54 824.5H57 M42 830.5H57 M54 836.5H57 M54 842.5H57 M54 848.5H57 M54 854.5H57 M54 860.5H57 M42 866.5H57 M54 872.5H57 M54 878.5H57 M54 884.5H57 M54 890.5H57 M54 896.5H57 M42 902.5H57 M54 908.5H57 M54 914.5H57 M54 920.5H57 M54 926.5H57 M54 932.5H57 M42 938.5H57 M54 944.5H57 M54 950.5H57 M54 956.5H57 M54 962.5H57 M54 968.5H57 M42 974.5H57 M54 980.5H57 M54 986.5H57 M54 992.5H57 M54 998.5H57 M54 1004.5H57 M42 1010.5H57 M54 1016.5H57 M54 1022.5H57 M54 1028.5H57 M54 1034.5H57 M54 1040.5H57 M42 1046.5H57 M54 1052.5H57 M54 1058.5H57 M54 1064.5H57 M54 1070.5H57 M54 1076.5H57 M42 1082.5H57 M54 1088.5H57 M54 1094.5H57 M54 1100.5H57 M54 1106.5H57 M54 1112.5H57 M42 1118.5H57 M54 1124.5H57 M54 1130.5H57 M54 1136.5H57 M54 1142.5H57 M54 1148.5H57 M42 1154.5H57 M54 1160.5H57 M54 1166.5H57 M54 1172.5H57 M54 1178.5H57" stroke="#7a7a7a" stroke-width="1"/></svg>
<div class="a" style="left:0;top:136px;width:60px;height:1046px;overflow:hidden"><div class="a" style="left:0;top:-136px;width:60px;height:1200px"><div class="a vl" style="top:132.7px">0</div><div class="a vl" style="top:159.4px">7</div><div class="a vl" style="top:168.7px">2</div><div class="a vl" style="top:186.1px">1</div><div class="a vl" style="top:195.4px">4</div><div class="a vl" style="top:204.7px">4</div><div class="a vl" style="top:222.1px">2</div><div class="a vl" style="top:231.4px">1</div><div class="a vl" style="top:240.7px">6</div><div class="a vl" style="top:258.1px">2</div><div class="a vl" style="top:267.4px">8</div><div class="a vl" style="top:276.7px">8</div><div class="a vl" style="top:294.1px">3</div><div class="a vl" style="top:303.4px">6</div><div class="a vl" style="top:312.7px">0</div><div class="a vl" style="top:330.1px">4</div><div class="a vl" style="top:339.4px">3</div><div class="a vl" style="top:348.7px">2</div><div class="a vl" style="top:366.1px">5</div><div class="a vl" style="top:375.4px">0</div><div class="a vl" style="top:384.7px">4</div><div class="a vl" style="top:402.1px">5</div><div class="a vl" style="top:411.4px">7</div><div class="a vl" style="top:420.7px">6</div><div class="a vl" style="top:438.1px">6</div><div class="a vl" style="top:447.4px">4</div><div class="a vl" style="top:456.7px">8</div><div class="a vl" style="top:474.1px">7</div><div class="a vl" style="top:483.4px">2</div><div class="a vl" style="top:492.7px">0</div><div class="a vl" style="top:510.1px">7</div><div class="a vl" style="top:519.4px">9</div><div class="a vl" style="top:528.7px">2</div><div class="a vl" style="top:546.1px">8</div><div class="a vl" style="top:555.4px">6</div><div class="a vl" style="top:564.7px">4</div><div class="a vl" style="top:582.1px">9</div><div class="a vl" style="top:591.4px">3</div><div class="a vl" style="top:600.7px">6</div><div class="a vl" style="top:608.8px">1</div><div class="a vl" style="top:618.1px">0</div><div class="a vl" style="top:627.4px">0</div><div class="a vl" style="top:636.7px">8</div><div class="a vl" style="top:644.8px">1</div><div class="a vl" style="top:654.1px">0</div><div class="a vl" style="top:663.4px">8</div><div class="a vl" style="top:672.7px">0</div><div class="a vl" style="top:680.8px">1</div><div class="a vl" style="top:690.1px">1</div><div class="a vl" style="top:699.4px">5</div><div class="a vl" style="top:708.7px">2</div><div class="a vl" style="top:716.8px">1</div><div class="a vl" style="top:726.1px">2</div><div class="a vl" style="top:735.4px">2</div><div class="a vl" style="top:744.7px">4</div><div class="a vl" style="top:752.8px">1</div><div class="a vl" style="top:762.1px">2</div><div class="a vl" style="top:771.4px">9</div><div class="a vl" style="top:780.7px">6</div><div class="a vl" style="top:788.8px">1</div><div class="a vl" style="top:798.1px">3</div><div class="a vl" style="top:807.4px">6</div><div class="a vl" style="top:816.7px">8</div><div class="a vl" style="top:824.8px">1</div><div class="a vl" style="top:834.1px">4</div><div class="a vl" style="top:843.4px">4</div><div class="a vl" style="top:852.7px">0</div><div class="a vl" style="top:860.8px">1</div><div class="a vl" style="top:870.1px">5</div><div class="a vl" style="top:879.4px">1</div><div class="a vl" style="top:888.7px">2</div><div class="a vl" style="top:896.8px">1</div><div class="a vl" style="top:906.1px">5</div><div class="a vl" style="top:915.4px">8</div><div class="a vl" style="top:924.7px">4</div><div class="a vl" style="top:932.8px">1</div><div class="a vl" style="top:942.1px">6</div><div class="a vl" style="top:951.4px">5</div><div class="a vl" style="top:960.7px">6</div><div class="a vl" style="top:968.8px">1</div><div class="a vl" style="top:978.1px">7</div><div class="a vl" style="top:987.4px">2</div><div class="a vl" style="top:996.7px">8</div><div class="a vl" style="top:1004.8px">1</div><div class="a vl" style="top:1014.1px">8</div><div class="a vl" style="top:1023.4px">0</div><div class="a vl" style="top:1032.7px">0</div><div class="a vl" style="top:1040.8px">1</div><div class="a vl" style="top:1050.1px">8</div><div class="a vl" style="top:1059.4px">7</div><div class="a vl" style="top:1068.7px">2</div><div class="a vl" style="top:1076.8px">1</div><div class="a vl" style="top:1086.1px">9</div><div class="a vl" style="top:1095.4px">4</div><div class="a vl" style="top:1104.7px">4</div><div class="a vl" style="top:1112.8px">2</div><div class="a vl" style="top:1122.1px">0</div><div class="a vl" style="top:1131.4px">1</div><div class="a vl" style="top:1140.7px">6</div></div></div><div class="a" style="left:57.5px;top:136px;width:1553px;height:1046px;background:#636363"></div>
<div class="a" style="left:143px;top:144.5px;width:1367.5px;height:1027px;background:#fff;border:1.5px solid #1c1c1c"></div>
<div class="a" style="left:1610px;top:136px;width:16px;height:1046px;background:#434343"></div>
<div class="a" style="left:1612px;top:640px;width:12px;height:24px;background:#555;border-radius:6px"></div>
<svg style="left:1612px;top:1170px" width="12" height="8"><path d="M1.500 1.500l4.500 4.500 4.500-4.500" fill="none" stroke="#bdbdbd" stroke-width="1.100"/></svg>
<div class="a" style="left:1626px;top:90px;width:3px;height:1110px;background:#333"></div><svg style="left:0;top:0" width="1920" height="1200" viewBox="0 0 1920 1200"><defs><clipPath id="circ"><circle cx="828" cy="762" r="362"/></clipPath></defs><circle cx="828" cy="762" r="362" fill="#a2c3f0"/><circle cx="828" cy="762" r="340" fill="#3b2db8"/><path d="M706.0 870.0 C707.2 878.3 711.2 902.5 713.0 920.0 C714.8 937.5 717.5 956.7 717.0 975.0 C716.5 993.3 714.7 1013.8 710.0 1030.0 C705.3 1046.2 700.7 1053.7 689.0 1072.0 C677.3 1090.3 648.2 1128.7 640.0 1140.0 L640 1200 L1016 1200 L1016.0 1140.0 C1007.8 1128.7 978.7 1090.3 967.0 1072.0 C955.3 1053.7 950.7 1046.2 946.0 1030.0 C941.3 1013.8 939.5 993.3 939.0 975.0 C938.5 956.7 941.2 937.5 943.0 920.0 C944.8 902.5 948.8 878.3 950.0 870.0 Z" fill="#a2c3f0" clip-path="url(#circ)"/><g clip-path="url(#circ)"><path d="M752 988 C750 1040 742 1080 727 1130 L771 1130 C772 1090 777 1055 786 1030 Z" fill="#e5e2f6"/><g transform="translate(1656 0) scale(-1 1)"><path d="M752 988 C750 1040 742 1080 727 1130 L771 1130 C772 1090 777 1055 786 1030 Z" fill="#e5e2f6"/></g></g><path d="M824.500 1045 L831.500 1045 L834.500 1100 L821.500 1100 Z" fill="#3b2db8"/><path d="M714.0 540.0 C641.3 591.5 576.9 672.6 573.6 765.0 C607.0 743.3 646.3 732.1 686.0 731.4 L712 731 L730 536 Z" fill="#2b2b2b"/><path d="M711.0 564.0 C653.2 596.6 616.2 668.5 598.6 729.8 L610.2 724.5 C621.7 666.0 663.2 611.1 710.0 576.0 L711 564 Z" fill="#fff"/><path d="M710.0 576.0 C663.2 611.1 621.7 666.0 610.2 724.5 C635.5 713.8 663.6 708.4 691.0 707.5 L712 700 L712 576 Z" fill="#c41e26"/><g transform="translate(1656 0) scale(-1 1)"><path d="M714.0 540.0 C641.3 591.5 576.9 672.6 573.6 765.0 C607.0 743.3 646.3 732.1 686.0 731.4 L712 731 L730 536 Z" fill="#2b2b2b"/><path d="M711.0 564.0 C653.2 596.6 616.2 668.5 598.6 729.8 L610.2 724.5 C621.7 666.0 663.2 611.1 710.0 576.0 L711 564 Z" fill="#fff"/><path d="M710.0 576.0 C663.2 611.1 621.7 666.0 610.2 724.5 C635.5 713.8 663.6 708.4 691.0 707.5 L712 700 L712 576 Z" fill="#c41e26"/></g><path d="M703.3 679.0 C701.6 682.3 695.9 690.5 693.3 698.9 C690.7 707.3 688.2 717.4 687.8 729.4 C687.3 741.4 689.2 757.1 690.6 771.0 C692.0 784.9 694.1 798.9 696.0 812.8 C697.9 826.7 699.8 841.4 701.7 854.4 C703.6 867.4 704.9 882.3 707.2 890.6 C709.5 898.9 713.2 898.4 715.5 904.4 C717.8 910.4 718.7 919.8 721.0 926.7 C723.3 933.6 726.1 939.5 729.4 946.0 C732.6 952.5 736.3 958.6 740.5 965.6 C744.7 972.6 749.8 980.4 754.4 987.8 C759.0 995.2 764.6 1003.5 768.3 1010.0 C772.0 1016.5 773.9 1021.6 776.7 1026.7 C779.5 1031.8 781.1 1036.9 785.0 1040.6 C788.9 1044.3 793.0 1046.9 800.0 1048.9 C807.0 1050.9 822.8 1051.8 827.3 1052.4 C830.2 1051.8 839.5 1051.4 845.0 1049.0 C850.5 1046.6 855.7 1041.5 860.0 1037.8 C864.3 1034.1 867.3 1031.3 871.0 1026.7 C874.7 1022.1 878.0 1015.6 882.2 1010.0 C886.4 1004.4 891.8 999.5 896.0 993.0 C900.2 986.5 903.2 978.4 907.2 971.0 C911.2 963.6 917.4 954.4 919.7 948.9 C922.0 943.4 919.4 942.0 921.0 937.8 C922.6 933.6 926.1 929.9 929.4 923.9 C932.6 917.9 937.2 907.2 940.5 901.7 C943.8 896.2 945.6 894.8 948.9 890.6 C952.1 886.4 957.5 885.1 960.0 876.7 C962.5 868.4 963.1 855.8 964.0 840.5 C964.9 825.2 965.2 803.5 965.5 785.0 C965.8 766.5 966.0 744.2 965.5 729.4 C965.0 714.6 964.9 704.4 962.8 696.0 C960.7 687.6 954.4 681.8 952.7 679.0 Z" fill="#2b2b2b"/><path d="M828.0 283.0 C827.3 283.3 825.1 284.3 823.9 285.0 C822.8 285.7 822.0 286.3 821.2 287.0 C820.3 287.7 819.5 288.3 818.8 289.0 C818.0 289.7 817.3 290.3 816.6 291.0 C815.9 291.7 815.2 292.3 814.5 293.0 C813.8 293.7 813.8 293.7 812.5 295.0 C811.3 296.3 808.8 299.0 807.0 301.0 C805.3 303.0 803.7 305.0 802.0 307.0 C800.4 309.0 798.9 311.0 797.4 313.0 C795.9 315.0 794.5 317.0 793.1 319.0 C791.7 321.0 790.3 323.0 789.0 325.0 C787.7 327.0 786.4 329.0 785.1 331.0 C783.8 333.0 782.6 335.0 781.4 337.0 C780.2 339.0 779.0 341.0 777.9 343.0 C776.7 345.0 775.6 347.0 774.5 349.0 C773.4 351.0 772.3 353.0 771.3 355.0 C770.2 357.0 769.2 359.0 768.2 361.0 C767.2 363.0 766.2 365.0 765.2 367.0 C764.3 369.0 763.3 371.0 762.4 373.0 C761.4 375.0 760.5 377.0 759.6 379.0 C758.7 381.0 757.9 383.0 757.0 385.0 C756.1 387.0 755.3 389.0 754.5 391.0 C753.6 393.0 752.8 395.0 752.0 397.0 C751.2 399.0 750.4 401.0 749.7 403.0 C748.9 405.0 748.1 407.0 747.4 409.0 C746.6 411.0 745.9 413.0 745.2 415.0 C744.5 417.0 743.8 419.0 743.1 421.0 C742.4 423.0 741.7 425.0 741.1 427.0 C740.4 429.0 739.8 431.0 739.1 433.0 C738.5 435.0 737.9 437.0 737.2 439.0 C736.6 441.0 736.0 443.0 735.4 445.0 C734.8 447.0 734.3 449.0 733.7 451.0 C733.1 453.0 732.6 455.0 732.0 457.0 C731.5 459.0 730.9 461.0 730.4 463.0 C729.9 465.0 729.3 467.0 728.8 469.0 C728.3 471.0 727.8 473.0 727.3 475.0 C726.9 477.0 726.4 479.0 725.9 481.0 C725.4 483.0 725.0 485.0 724.5 487.0 C724.1 489.0 723.6 491.0 723.2 493.0 C722.8 495.0 722.3 497.0 721.9 499.0 C721.5 501.0 721.1 503.0 720.7 505.0 C720.3 507.0 719.9 509.0 719.5 511.0 C719.2 513.0 718.8 515.0 718.4 517.0 C718.1 519.0 717.7 521.0 717.4 523.0 C717.0 525.0 716.7 527.0 716.3 529.0 C716.0 531.0 715.7 533.0 715.4 535.0 C715.0 537.0 714.7 539.0 714.4 541.0 C714.1 543.0 713.8 545.0 713.5 547.0 C713.2 549.0 713.0 551.0 712.7 553.0 C712.4 555.0 712.1 557.0 711.9 559.0 C711.6 561.0 711.4 563.0 711.1 565.0 C710.9 567.0 710.6 569.0 710.4 571.0 C710.2 573.0 709.9 575.0 709.7 577.0 C709.5 579.0 709.3 581.0 709.1 583.0 C708.9 585.0 708.7 587.0 708.5 589.0 C708.3 591.0 708.1 593.0 707.9 595.0 C707.7 597.0 707.6 599.0 707.4 601.0 C707.2 603.0 707.1 605.0 706.9 607.0 C706.7 609.0 706.6 611.0 706.4 613.0 C706.3 615.0 706.2 617.0 706.0 619.0 C705.9 621.0 705.8 623.0 705.6 625.0 C705.5 627.0 705.4 629.0 705.3 631.0 C705.2 633.0 705.1 635.0 705.0 637.0 C704.9 639.0 704.8 641.0 704.7 643.0 C704.6 645.0 704.5 647.0 704.4 649.0 C704.3 651.0 704.3 653.0 704.2 655.0 C704.1 657.0 704.1 659.0 704.0 661.0 C703.9 663.0 703.9 665.0 703.8 667.0 C703.8 669.0 703.7 671.0 703.7 673.0 C703.7 675.0 703.7 674.5 703.6 679.0 C703.5 683.5 703.1 696.5 703.0 700.0 L953.0 700.0 C952.9 696.5 952.5 683.5 952.4 679.0 C952.3 674.5 952.3 675.0 952.3 673.0 C952.3 671.0 952.2 669.0 952.2 667.0 C952.1 665.0 952.1 663.0 952.0 661.0 C951.9 659.0 951.9 657.0 951.8 655.0 C951.7 653.0 951.7 651.0 951.6 649.0 C951.5 647.0 951.4 645.0 951.3 643.0 C951.2 641.0 951.1 639.0 951.0 637.0 C950.9 635.0 950.8 633.0 950.7 631.0 C950.6 629.0 950.5 627.0 950.4 625.0 C950.2 623.0 950.1 621.0 950.0 619.0 C949.8 617.0 949.7 615.0 949.6 613.0 C949.4 611.0 949.3 609.0 949.1 607.0 C948.9 605.0 948.8 603.0 948.6 601.0 C948.4 599.0 948.3 597.0 948.1 595.0 C947.9 593.0 947.7 591.0 947.5 589.0 C947.3 587.0 947.1 585.0 946.9 583.0 C946.7 581.0 946.5 579.0 946.3 577.0 C946.1 575.0 945.8 573.0 945.6 571.0 C945.4 569.0 945.1 567.0 944.9 565.0 C944.6 563.0 944.4 561.0 944.1 559.0 C943.9 557.0 943.6 555.0 943.3 553.0 C943.0 551.0 942.8 549.0 942.5 547.0 C942.2 545.0 941.9 543.0 941.6 541.0 C941.3 539.0 941.0 537.0 940.6 535.0 C940.3 533.0 940.0 531.0 939.7 529.0 C939.3 527.0 939.0 525.0 938.6 523.0 C938.3 521.0 937.9 519.0 937.6 517.0 C937.2 515.0 936.8 513.0 936.5 511.0 C936.1 509.0 935.7 507.0 935.3 505.0 C934.9 503.0 934.5 501.0 934.1 499.0 C933.7 497.0 933.2 495.0 932.8 493.0 C932.4 491.0 931.9 489.0 931.5 487.0 C931.0 485.0 930.6 483.0 930.1 481.0 C929.6 479.0 929.1 477.0 928.7 475.0 C928.2 473.0 927.7 471.0 927.2 469.0 C926.7 467.0 926.1 465.0 925.6 463.0 C925.1 461.0 924.5 459.0 924.0 457.0 C923.4 455.0 922.9 453.0 922.3 451.0 C921.7 449.0 921.2 447.0 920.6 445.0 C920.0 443.0 919.4 441.0 918.8 439.0 C918.1 437.0 917.5 435.0 916.9 433.0 C916.2 431.0 915.6 429.0 914.9 427.0 C914.3 425.0 913.6 423.0 912.9 421.0 C912.2 419.0 911.5 417.0 910.8 415.0 C910.1 413.0 909.4 411.0 908.6 409.0 C907.9 407.0 907.1 405.0 906.3 403.0 C905.6 401.0 904.8 399.0 904.0 397.0 C903.2 395.0 902.4 393.0 901.5 391.0 C900.7 389.0 899.9 387.0 899.0 385.0 C898.1 383.0 897.3 381.0 896.4 379.0 C895.5 377.0 894.6 375.0 893.6 373.0 C892.7 371.0 891.7 369.0 890.8 367.0 C889.8 365.0 888.8 363.0 887.8 361.0 C886.8 359.0 885.8 357.0 884.7 355.0 C883.7 353.0 882.6 351.0 881.5 349.0 C880.4 347.0 879.3 345.0 878.1 343.0 C877.0 341.0 875.8 339.0 874.6 337.0 C873.4 335.0 872.2 333.0 870.9 331.0 C869.6 329.0 868.3 327.0 867.0 325.0 C865.7 323.0 864.3 321.0 862.9 319.0 C861.5 317.0 860.1 315.0 858.6 313.0 C857.1 311.0 855.6 309.0 854.0 307.0 C852.3 305.0 850.7 303.0 849.0 301.0 C847.2 299.0 844.7 296.3 843.5 295.0 C842.2 293.7 842.2 293.7 841.5 293.0 C840.8 292.3 840.1 291.7 839.4 291.0 C838.7 290.3 838.0 289.7 837.2 289.0 C836.5 288.3 835.7 287.7 834.8 287.0 C834.0 286.3 833.2 285.7 832.1 285.0 C830.9 284.3 828.7 283.3 828.0 283.0 Z" fill="#2b2b2b"/><path d="M828.0 305.8 C827.7 306.1 826.7 307.1 826.0 307.8 C825.4 308.5 824.9 309.1 824.3 309.8 C823.8 310.5 823.2 311.1 822.7 311.8 C822.1 312.5 821.6 313.1 821.1 313.8 C820.6 314.5 820.0 315.1 819.5 315.8 C819.0 316.5 819.0 316.5 818.0 317.8 C817.1 319.1 815.1 321.8 813.7 323.8 C812.4 325.8 811.0 327.8 809.7 329.8 C808.4 331.8 807.1 333.8 805.9 335.8 C804.6 337.8 803.4 339.8 802.3 341.8 C801.1 343.8 799.9 345.8 798.8 347.8 C797.7 349.8 796.6 351.8 795.5 353.8 C794.4 355.8 793.3 357.8 792.3 359.8 C791.3 361.8 790.3 363.8 789.3 365.8 C788.3 367.8 787.3 369.8 786.3 371.8 C785.4 373.8 784.5 375.8 783.5 377.8 C782.6 379.8 781.7 381.8 780.8 383.8 C780.0 385.8 779.1 387.8 778.3 389.8 C777.4 391.8 776.6 393.8 775.8 395.8 C774.9 397.8 774.1 399.8 773.4 401.8 C772.6 403.8 771.8 405.8 771.1 407.8 C770.3 409.8 769.6 411.8 768.8 413.8 C768.1 415.8 767.4 417.8 766.7 419.8 C766.0 421.8 765.3 423.8 764.6 425.8 C764.0 427.8 763.3 429.8 762.6 431.8 C762.0 433.8 761.4 435.8 760.7 437.8 C760.1 439.8 759.5 441.8 758.9 443.8 C758.3 445.8 757.7 447.8 757.1 449.8 C756.6 451.8 756.0 453.8 755.4 455.8 C754.9 457.8 754.3 459.8 753.8 461.8 C753.3 463.8 752.7 465.8 752.2 467.8 C751.7 469.8 751.2 471.8 750.7 473.8 C750.2 475.8 749.7 477.8 749.3 479.8 C748.8 481.8 748.3 483.8 747.9 485.8 C747.4 487.8 747.0 489.8 746.6 491.8 C746.1 493.8 745.7 495.8 745.3 497.8 C744.9 499.8 744.5 501.8 744.1 503.8 C743.7 505.8 743.3 507.8 742.9 509.8 C742.5 511.8 742.1 513.8 741.8 515.8 C741.4 517.8 741.1 519.8 740.7 521.8 C740.4 523.8 740.0 525.8 739.7 527.8 C739.4 529.8 739.0 531.8 738.7 533.8 C738.4 535.8 738.1 537.8 737.8 539.8 C737.5 541.8 737.2 543.8 736.9 545.8 C736.6 547.8 736.4 549.8 736.1 551.8 C735.8 553.8 735.6 555.8 735.3 557.8 C735.1 559.8 734.8 561.8 734.6 563.8 C734.3 565.8 734.1 567.8 733.9 569.8 C733.6 571.8 733.4 573.8 733.2 575.8 C733.0 577.8 732.8 579.8 732.6 581.8 C732.4 583.8 732.2 585.8 732.0 587.8 C731.8 589.8 731.7 591.8 731.5 593.8 C731.3 595.8 731.2 597.8 731.0 599.8 C730.8 601.8 730.7 603.8 730.5 605.8 C730.4 607.8 730.2 609.8 730.1 611.8 C730.0 613.8 729.9 615.8 729.7 617.8 C729.6 619.8 729.5 621.8 729.4 623.8 C729.3 625.8 729.2 627.8 729.1 629.8 C729.0 631.8 728.9 633.8 728.8 635.8 C728.7 637.8 728.6 639.8 728.5 641.8 C728.5 643.8 728.4 645.8 728.3 647.8 C728.3 649.8 728.2 651.8 728.2 653.8 C728.1 655.8 728.1 657.8 728.0 659.8 C728.0 661.8 727.9 663.9 727.9 665.8 C727.9 667.7 727.8 670.1 727.8 671.0 L928.2 671.0 C928.2 670.1 928.1 667.7 928.1 665.8 C928.1 663.9 928.0 661.8 928.0 659.8 C927.9 657.8 927.9 655.8 927.8 653.8 C927.8 651.8 927.7 649.8 927.7 647.8 C927.6 645.8 927.5 643.8 927.5 641.8 C927.4 639.8 927.3 637.8 927.2 635.8 C927.1 633.8 927.0 631.8 926.9 629.8 C926.8 627.8 926.7 625.8 926.6 623.8 C926.5 621.8 926.4 619.8 926.3 617.8 C926.1 615.8 926.0 613.8 925.9 611.8 C925.8 609.8 925.6 607.8 925.5 605.8 C925.3 603.8 925.2 601.8 925.0 599.8 C924.8 597.8 924.7 595.8 924.5 593.8 C924.3 591.8 924.2 589.8 924.0 587.8 C923.8 585.8 923.6 583.8 923.4 581.8 C923.2 579.8 923.0 577.8 922.8 575.8 C922.6 573.8 922.4 571.8 922.1 569.8 C921.9 567.8 921.7 565.8 921.4 563.8 C921.2 561.8 920.9 559.8 920.7 557.8 C920.4 555.8 920.2 553.8 919.9 551.8 C919.6 549.8 919.4 547.8 919.1 545.8 C918.8 543.8 918.5 541.8 918.2 539.8 C917.9 537.8 917.6 535.8 917.3 533.8 C917.0 531.8 916.6 529.8 916.3 527.8 C916.0 525.8 915.6 523.8 915.3 521.8 C914.9 519.8 914.6 517.8 914.2 515.8 C913.9 513.8 913.5 511.8 913.1 509.8 C912.7 507.8 912.3 505.8 911.9 503.8 C911.5 501.8 911.1 499.8 910.7 497.8 C910.3 495.8 909.9 493.8 909.4 491.8 C909.0 489.8 908.6 487.8 908.1 485.8 C907.7 483.8 907.2 481.8 906.7 479.8 C906.3 477.8 905.8 475.8 905.3 473.8 C904.8 471.8 904.3 469.8 903.8 467.8 C903.3 465.8 902.7 463.8 902.2 461.8 C901.7 459.8 901.1 457.8 900.6 455.8 C900.0 453.8 899.4 451.8 898.9 449.8 C898.3 447.8 897.7 445.8 897.1 443.8 C896.5 441.8 895.9 439.8 895.3 437.8 C894.6 435.8 894.0 433.8 893.4 431.8 C892.7 429.8 892.0 427.8 891.4 425.8 C890.7 423.8 890.0 421.8 889.3 419.8 C888.6 417.8 887.9 415.8 887.2 413.8 C886.4 411.8 885.7 409.8 884.9 407.8 C884.2 405.8 883.4 403.8 882.6 401.8 C881.9 399.8 881.1 397.8 880.2 395.8 C879.4 393.8 878.6 391.8 877.7 389.8 C876.9 387.8 876.0 385.8 875.2 383.8 C874.3 381.8 873.4 379.8 872.5 377.8 C871.5 375.8 870.6 373.8 869.7 371.8 C868.7 369.8 867.7 367.8 866.7 365.8 C865.7 363.8 864.7 361.8 863.7 359.8 C862.7 357.8 861.6 355.8 860.5 353.8 C859.4 351.8 858.3 349.8 857.2 347.8 C856.1 345.8 854.9 343.8 853.7 341.8 C852.6 339.8 851.4 337.8 850.1 335.8 C848.9 333.8 847.6 331.8 846.3 329.8 C845.0 327.8 843.6 325.8 842.3 323.8 C840.9 321.8 838.9 319.1 838.0 317.8 C837.0 316.5 837.0 316.5 836.5 315.8 C836.0 315.1 835.4 314.5 834.9 313.8 C834.4 313.1 833.9 312.5 833.3 311.8 C832.8 311.1 832.2 310.5 831.7 309.8 C831.1 309.1 830.6 308.5 830.0 307.8 C829.3 307.1 828.3 306.1 828.0 305.8 Z" fill="#fff"/><rect x="727" y="670" width="202" height="90" fill="#2b2b2b"/><path d="M727.800 660 L727.800 671 L741.700 691 L741.700 660 Z" fill="#fff"/><g transform="translate(1656 0) scale(-1 1)"><path d="M727.800 660 L727.800 671 L741.700 691 L741.700 660 Z" fill="#fff"/></g><path d="M828.0 324.6 C827.6 324.9 826.1 325.9 825.4 326.6 C824.6 327.3 824.2 327.9 823.7 328.6 C823.1 329.3 822.6 329.9 822.1 330.6 C821.6 331.3 821.1 331.9 820.6 332.6 C820.1 333.3 819.7 333.9 819.2 334.6 C818.8 335.3 818.7 335.3 817.9 336.6 C817.0 337.9 815.3 340.6 814.1 342.6 C812.9 344.6 811.7 346.6 810.6 348.6 C809.4 350.6 808.3 352.6 807.2 354.6 C806.2 356.6 805.1 358.6 804.1 360.6 C803.1 362.6 802.1 364.6 801.1 366.6 C800.1 368.6 799.2 370.6 798.2 372.6 C797.3 374.6 796.4 376.6 795.5 378.6 C794.6 380.6 793.7 382.6 792.8 384.6 C792.0 386.6 791.1 388.6 790.3 390.6 C789.5 392.6 788.7 394.6 787.9 396.6 C787.1 398.6 786.3 400.6 785.6 402.6 C784.8 404.6 784.0 406.6 783.3 408.6 C782.6 410.6 781.8 412.6 781.1 414.6 C780.4 416.6 779.7 418.6 779.0 420.6 C778.4 422.6 777.7 424.6 777.0 426.6 C776.4 428.6 775.7 430.6 775.1 432.6 C774.5 434.6 773.8 436.6 773.2 438.6 C772.6 440.6 772.0 442.6 771.4 444.6 C770.8 446.6 770.3 448.6 769.7 450.6 C769.1 452.6 768.6 454.6 768.0 456.6 C767.5 458.6 766.9 460.6 766.4 462.6 C765.9 464.6 765.4 466.6 764.9 468.6 C764.4 470.6 763.9 472.6 763.4 474.6 C762.9 476.6 762.4 478.6 762.0 480.6 C761.5 482.6 761.0 484.6 760.6 486.6 C760.2 488.6 759.7 490.6 759.3 492.6 C758.9 494.6 758.4 496.6 758.0 498.6 C757.6 500.6 757.2 502.6 756.8 504.6 C756.4 506.6 756.0 508.6 755.7 510.6 C755.3 512.6 754.9 514.6 754.6 516.6 C754.2 518.6 753.9 520.6 753.5 522.6 C753.2 524.6 752.8 526.6 752.5 528.6 C752.2 530.6 751.9 532.6 751.6 534.6 C751.3 536.6 751.0 538.6 750.7 540.6 C750.4 542.6 750.1 544.6 749.8 546.6 C749.5 548.6 749.3 550.6 749.0 552.6 C748.7 554.6 748.5 556.6 748.2 558.6 C748.0 560.6 747.7 562.6 747.5 564.6 C747.3 566.6 747.0 568.6 746.8 570.6 C746.6 572.6 746.4 574.6 746.2 576.6 C746.0 578.6 745.8 580.6 745.6 582.6 C745.4 584.6 745.2 586.6 745.1 588.6 C744.9 590.6 744.7 592.6 744.6 594.6 C744.4 596.6 744.2 598.6 744.1 600.6 C743.9 602.6 743.8 604.6 743.7 606.6 C743.5 608.6 743.4 610.6 743.3 612.6 C743.2 614.6 743.0 616.6 742.9 618.6 C742.8 620.6 742.7 622.6 742.6 624.6 C742.5 626.6 742.5 628.6 742.4 630.6 C742.3 632.6 742.2 634.6 742.2 636.6 C742.1 638.6 742.0 640.6 742.0 642.6 C741.9 644.6 741.9 646.6 741.8 648.6 C741.8 650.6 741.7 652.6 741.7 654.6 C741.7 656.6 741.6 658.6 741.6 660.6 C741.6 662.6 741.6 664.6 741.6 666.6 C741.6 668.6 741.6 670.6 741.6 672.6 C741.6 674.6 741.6 676.6 741.6 678.6 C741.6 680.6 741.7 682.6 741.7 684.6 C741.7 686.6 741.8 689.5 741.8 690.6 C741.8 691.7 741.8 690.9 741.8 691.0 C742.4 693.1 744.0 697.3 745.6 703.4 C747.2 709.5 749.5 720.0 751.2 727.8 C752.9 735.6 754.1 745.6 755.6 750.0 C757.1 754.4 759.3 753.3 760.0 754.0 C761.5 752.8 764.7 750.5 769.0 746.7 C773.3 742.9 780.1 735.3 785.6 731.2 C791.1 727.1 795.2 724.6 802.3 722.3 C809.4 720.0 819.4 717.5 828.0 717.5 C836.6 717.5 846.6 720.0 853.7 722.3 C860.8 724.6 864.9 727.1 870.4 731.2 C875.9 735.3 882.7 742.9 887.0 746.7 C891.3 750.5 894.5 752.8 896.0 754.0 C896.7 753.3 898.9 754.4 900.4 750.0 C901.9 745.6 903.1 735.6 904.8 727.8 C906.5 720.0 908.8 709.5 910.4 703.4 C912.0 697.3 913.6 693.1 914.3 691.0 C914.2 690.9 914.2 691.7 914.2 690.6 C914.2 689.5 914.3 686.6 914.3 684.6 C914.3 682.6 914.4 680.6 914.4 678.6 C914.4 676.6 914.4 674.6 914.4 672.6 C914.4 670.6 914.4 668.6 914.4 666.6 C914.4 664.6 914.4 662.6 914.4 660.6 C914.4 658.6 914.3 656.6 914.3 654.6 C914.3 652.6 914.2 650.6 914.2 648.6 C914.1 646.6 914.1 644.6 914.0 642.6 C914.0 640.6 913.9 638.6 913.8 636.6 C913.8 634.6 913.7 632.6 913.6 630.6 C913.5 628.6 913.5 626.6 913.4 624.6 C913.3 622.6 913.2 620.6 913.1 618.6 C913.0 616.6 912.8 614.6 912.7 612.6 C912.6 610.6 912.5 608.6 912.3 606.6 C912.2 604.6 912.1 602.6 911.9 600.6 C911.8 598.6 911.6 596.6 911.4 594.6 C911.3 592.6 911.1 590.6 910.9 588.6 C910.8 586.6 910.6 584.6 910.4 582.6 C910.2 580.6 910.0 578.6 909.8 576.6 C909.6 574.6 909.4 572.6 909.2 570.6 C909.0 568.6 908.7 566.6 908.5 564.6 C908.3 562.6 908.0 560.6 907.8 558.6 C907.5 556.6 907.3 554.6 907.0 552.6 C906.7 550.6 906.5 548.6 906.2 546.6 C905.9 544.6 905.6 542.6 905.3 540.6 C905.0 538.6 904.7 536.6 904.4 534.6 C904.1 532.6 903.8 530.6 903.5 528.6 C903.2 526.6 902.8 524.6 902.5 522.6 C902.1 520.6 901.8 518.6 901.4 516.6 C901.1 514.6 900.7 512.6 900.3 510.6 C900.0 508.6 899.6 506.6 899.2 504.6 C898.8 502.6 898.4 500.6 898.0 498.6 C897.6 496.6 897.1 494.6 896.7 492.6 C896.3 490.6 895.8 488.6 895.4 486.6 C895.0 484.6 894.5 482.6 894.0 480.6 C893.6 478.6 893.1 476.6 892.6 474.6 C892.1 472.6 891.6 470.6 891.1 468.6 C890.6 466.6 890.1 464.6 889.6 462.6 C889.1 460.6 888.5 458.6 888.0 456.6 C887.4 454.6 886.9 452.6 886.3 450.6 C885.7 448.6 885.2 446.6 884.6 444.6 C884.0 442.6 883.4 440.6 882.8 438.6 C882.2 436.6 881.5 434.6 880.9 432.6 C880.3 430.6 879.6 428.6 879.0 426.6 C878.3 424.6 877.6 422.6 877.0 420.6 C876.3 418.6 875.6 416.6 874.9 414.6 C874.2 412.6 873.4 410.6 872.7 408.6 C872.0 406.6 871.2 404.6 870.4 402.6 C869.7 400.6 868.9 398.6 868.1 396.6 C867.3 394.6 866.5 392.6 865.7 390.6 C864.9 388.6 864.0 386.6 863.2 384.6 C862.3 382.6 861.4 380.6 860.5 378.6 C859.6 376.6 858.7 374.6 857.8 372.6 C856.8 370.6 855.9 368.6 854.9 366.6 C853.9 364.6 852.9 362.6 851.9 360.6 C850.9 358.6 849.8 356.6 848.8 354.6 C847.7 352.6 846.6 350.6 845.4 348.6 C844.3 346.6 843.1 344.6 841.9 342.6 C840.7 340.6 839.0 337.9 838.1 336.6 C837.3 335.3 837.2 335.3 836.8 334.6 C836.3 333.9 835.9 333.3 835.4 332.6 C834.9 331.9 834.4 331.3 833.9 330.6 C833.4 329.9 832.9 329.3 832.3 328.6 C831.8 327.9 831.4 327.3 830.6 326.6 C829.9 325.9 828.4 324.9 828.0 324.6 Z" fill="#c41e26"/><ellipse cx="826" cy="778.500" rx="55" ry="18" fill="#c41e26"/><circle cx="827.5" cy="444.5" r="59.700" fill="#2b2b2b"/><circle cx="827.5" cy="444.5" r="50.400" fill="#e0a33b"/><path d="M827.5 386V503M769 444.5H886" stroke="#2b2b2b" stroke-width="9.100"/><path d="M787.800 402 A56.400 56.400 0 0 1 787.800 487 M867.200 402 A56.400 56.400 0 0 0 867.200 487" fill="none" stroke="#2b2b2b" stroke-width="9.200"/></svg><svg style="left:320px;top:750px" width="24" height="28"><path d="M7.400 6.300V22L12 17.800H18.900Z" fill="#000"/></svg><div class="a" style="left:1628px;top:90px;width:292px;height:13px;background:#3a3a3a"></div>
<svg style="left:1652px;top:93px" width="10" height="7"><path d="M4 1L1.500 3.500 4 6M8 1L5.500 3.500 8 6" fill="none" stroke="#bdbdbd" stroke-width="1.100"/></svg>
<svg style="left:1903px;top:93px" width="10" height="7"><path d="M1 1l2.500 2.500L1 6M5 1l2.500 2.500L5 6" fill="none" stroke="#bdbdbd" stroke-width="1.100"/></svg>
<div class="a" style="left:1629px;top:103px;width:37px;height:1097px;background:#494949"></div>
<div class="a" style="left:1666px;top:103px;width:3px;height:1097px;background:#383838"></div>
<div class="a" style="left:1629px;top:103px;width:37px;height:95px;background:#4b4b4b"></div>
<div class="a" style="left:1638px;top:107px;width:19px;height:3px;background:repeating-linear-gradient(90deg,#383838 0 1px,transparent 1px 2px)"></div>
<div class="a" style="left:1629px;top:200px;width:37px;height:68px;background:#4b4b4b"></div>
<div class="a" style="left:1638px;top:204px;width:19px;height:3px;background:repeating-linear-gradient(90deg,#383838 0 1px,transparent 1px 2px)"></div>
<div class="a" style="left:1629px;top:270px;width:37px;height:67px;background:#4b4b4b"></div>
<div class="a" style="left:1638px;top:274px;width:19px;height:3px;background:repeating-linear-gradient(90deg,#383838 0 1px,transparent 1px 2px)"></div>
<div class="a" style="left:1629px;top:339px;width:37px;height:66px;background:#4b4b4b"></div>
<div class="a" style="left:1638px;top:343px;width:19px;height:3px;background:repeating-linear-gradient(90deg,#383838 0 1px,transparent 1px 2px)"></div>
<div class="a" style="left:1640px;top:117px;font-size:17px;line-height:18px;color:#d0d0d0">A</div>
<div class="a" style="left:1653px;top:116px;width:1px;height:19px;background:#d0d0d0"></div>
<div class="a" style="left:1641px;top:146px;font-size:17px;line-height:18px;font-weight:bold;color:#d0d0d0">¶</div>
<div class="a" style="left:1640px;top:172px;font-size:19px;line-height:20px;font-style:italic;font-family:'Liberation Serif',serif;color:#d0d0d0">O</div>
<div class="a" style="left:1646px;top:213px;font-size:14px;line-height:14px;color:#d0d0d0">A</div>
<svg style="left:1639px;top:222px" width="10" height="10"><rect x="0.500" y="0.500" width="5.500" height="5" fill="none" stroke="#d0d0d0" stroke-width="1"/><rect x="3" y="3.500" width="5.500" height="5" fill="none" stroke="#d0d0d0" stroke-width="1"/></svg>
<div class="a" style="left:1646px;top:241px;font-size:14px;line-height:14px;font-weight:bold;color:#d0d0d0">¶</div>
<svg style="left:1639px;top:251px" width="10" height="10"><rect x="0.500" y="0.500" width="5.500" height="5" fill="none" stroke="#d0d0d0" stroke-width="1"/><rect x="3" y="3.500" width="5.500" height="5" fill="none" stroke="#d0d0d0" stroke-width="1"/></svg>
<svg style="left:1639px;top:282px" width="19" height="19"><path d="M8 3H1.500v14h14v-6.500" fill="none" stroke="#d0d0d0" stroke-width="1.700"/><path d="M8 10.500L16 2.500M11 2h6v6" fill="none" stroke="#d0d0d0" stroke-width="1.500"/></svg>
<svg style="left:1638px;top:314px" width="20" height="12"><rect x="1" y="2" width="11" height="8" rx="4" fill="none" stroke="#d0d0d0" stroke-width="1.800"/><rect x="8" y="2" width="11" height="8" rx="4" fill="none" stroke="#d0d0d0" stroke-width="1.800"/></svg>
<svg style="left:1640px;top:350px" width="17" height="20"><path d="M4 11h9l-1 8H5z" fill="#d0d0d0"/><path d="M6 11V4M9 11V2M11 11l3-6" stroke="#d0d0d0" stroke-width="1.300"/><circle cx="6" cy="4" r="1.500" fill="#d0d0d0"/><path d="M9 1l1.500 3h-3z" fill="#d0d0d0"/><ellipse cx="14" cy="5" rx="2.500" ry="1.500" fill="#d0d0d0"/></svg>
<svg style="left:1640px;top:381px" width="17" height="17"><circle cx="8.500" cy="4.500" r="3.300" fill="#d0d0d0"/><circle cx="4.300" cy="9" r="3.300" fill="#d0d0d0"/><circle cx="12.700" cy="9" r="3.300" fill="#d0d0d0"/><path d="M8.500 7l1.500 8h2v1.500H5v-1.500h2z" fill="#d0d0d0"/></svg>
<div class="a" style="left:1669px;top:103px;width:251px;height:26px;background:#3d3d3d"></div><div class="a" style="left:1739px;top:106px;width:1px;height:23px;background:#363636"></div><div class="a" style="left:1740px;top:106px;width:49px;height:23px;background:#4b4b4b"></div><div class="a tab" style="left:1678px;top:110.0px;width:60px;overflow:hidden;color:#c8c8c8">Transform</div><svg style="left:1745px;top:112.5px" width="6" height="10"><path d="M1 3.500L3 1.500 5 3.500M1 6.500L3 8.500 5 6.500" fill="none" stroke="#c8c8c8" stroke-width="0.900"/></svg><div class="a tab" style="left:1754px;top:110.0px;width:33px;overflow:hidden;color:#ffffff">Align</div><svg style="left:1902px;top:113.0px" width="11" height="9"><g fill="#bdbdbd"><rect y="0" width="11" height="1.200"/><rect y="2.400" width="11" height="1.200"/><rect y="4.800" width="11" height="1.200"/><rect y="7.200" width="11" height="1.200"/></g></svg>
<div class="a" style="left:1669px;top:129px;width:251px;height:174px;background:#4b4b4b"></div>
<div class="a pt" style="left:1674px;top:139px;">Align Objects:</div>
<div class="a" style="left:1674px;top:185px;width:242px;height:1px;background:#444"></div>
<div class="a pt" style="left:1674px;top:197px;">Distribute Objects:</div>
<div class="a" style="left:1674px;top:244px;width:242px;height:1px;background:#444"></div>
<div class="a pt" style="left:1674px;top:255px;">Distribute Spacing:</div>
<div class="a pt" style="left:1870px;top:256px;">Align To:</div>
<div class="a" style="left:1846px;top:248px;width:1px;height:52px;background:#464646"></div>
<svg style="left:1678px;top:160px" width="18" height="19"><rect x="0.500" y="0" width="1.300" height="19" fill="#cacaca"/><rect x="2.500" y="2" width="7" height="5" fill="#cacaca"/><rect x="2.500" y="10" width="14" height="5" fill="#cacaca"/></svg><svg style="left:1714px;top:160px" width="18" height="19"><rect x="8.300" y="0" width="1.300" height="19" fill="#cacaca"/><rect x="5.500" y="2" width="7" height="5" fill="#cacaca"/><rect x="2" y="10" width="14" height="5" fill="#cacaca"/></svg><svg style="left:1751px;top:160px" width="18" height="19"><rect x="16" y="0" width="1.300" height="19" fill="#cacaca"/><rect x="8" y="2" width="7" height="5" fill="#cacaca"/><rect x="1" y="10" width="14" height="5" fill="#cacaca"/></svg><svg style="left:1819px;top:160px" width="19" height="18"><rect x="0" y="0.500" width="19" height="1.300" fill="#cacaca"/><rect x="2" y="2.500" width="5" height="14" fill="#cacaca"/><rect x="10" y="2.500" width="5" height="7" fill="#cacaca"/></svg><svg style="left:1855px;top:160px" width="19" height="18"><rect x="0" y="8.300" width="19" height="1.300" fill="#cacaca"/><rect x="2" y="2" width="5" height="14" fill="#cacaca"/><rect x="10" y="5.500" width="5" height="7" fill="#cacaca"/></svg><svg style="left:1891px;top:160px" width="19" height="18"><rect x="0" y="16" width="19" height="1.300" fill="#cacaca"/><rect x="2" y="1" width="5" height="14" fill="#cacaca"/><rect x="10" y="8" width="5" height="7" fill="#cacaca"/></svg><svg style="left:1677px;top:218px" width="20" height="18"><rect x="0" y="0.500" width="19" height="1.200" fill="#cacaca"/><rect x="0" y="9" width="19" height="1.200" fill="#cacaca"/><rect x="5" y="2.500" width="9" height="4" fill="#cacaca"/><rect x="3" y="11.500" width="13" height="5" fill="#cacaca"/></svg><svg style="left:1713px;top:218px" width="20" height="18"><rect x="0" y="4" width="19" height="1.200" fill="#cacaca"/><rect x="0" y="13" width="19" height="1.200" fill="#cacaca"/><rect x="5" y="1.500" width="9" height="5" fill="#cacaca"/><rect x="3" y="10.500" width="13" height="5" fill="#cacaca"/></svg><svg style="left:1749px;top:218px" width="20" height="18"><rect x="0" y="6.500" width="19" height="1.200" fill="#cacaca"/><rect x="0" y="16" width="19" height="1.200" fill="#cacaca"/><rect x="5" y="1" width="9" height="4" fill="#cacaca"/><rect x="3" y="9.500" width="13" height="5" fill="#cacaca"/></svg><svg style="left:1819px;top:217px" width="18" height="20"><rect x="0.500" y="0" width="1.200" height="19" fill="#cacaca"/><rect x="9" y="0" width="1.200" height="19" fill="#cacaca"/><rect x="2.500" y="3" width="5" height="13" fill="#cacaca"/><rect x="11.500" y="5" width="4" height="9" fill="#cacaca"/></svg><svg style="left:1855px;top:217px" width="18" height="20"><rect x="4" y="0" width="1.200" height="19" fill="#cacaca"/><rect x="13" y="0" width="1.200" height="19" fill="#cacaca"/><rect x="1.500" y="3" width="5" height="13" fill="#cacaca"/><rect x="10.500" y="5" width="5" height="9" fill="#cacaca"/></svg><svg style="left:1891px;top:217px" width="18" height="20"><rect x="7" y="0" width="1.200" height="19" fill="#cacaca"/><rect x="16" y="0" width="1.200" height="19" fill="#cacaca"/><rect x="1" y="3" width="5" height="13" fill="#cacaca"/><rect x="10" y="5" width="4" height="9" fill="#cacaca"/></svg><svg style="left:1677px;top:277px" width="19" height="17"><rect x="8" y="1" width="9" height="6" fill="#cacaca"/><rect x="6" y="9" width="12" height="6" fill="#cacaca"/><path d="M2.500 4v10M1 6l1.500-2 1.500 2M1 12l1.500 2 1.500-2" fill="none" stroke="#cacaca" stroke-width="1"/></svg><svg style="left:1710px;top:275px" width="17" height="19"><rect x="1" y="6" width="6" height="12" fill="#cacaca"/><rect x="9" y="8" width="6" height="9" fill="#cacaca"/><path d="M4 2.500h10M6 1l-2 1.500 2 1.500M12 1l2 1.500-2 1.500" fill="none" stroke="#cacaca" stroke-width="1"/></svg><div class="a" style="left:1736px;top:275px;width:14px;height:21px;background:#474747"></div><div class="a" style="left:1750px;top:275px;width:70px;height:21px;background:#474747"></div><div class="a pt" style="left:1757px;top:279px;color:#5a5a5a">0 pt</div><svg style="left:1877px;top:277px" width="25" height="17"><rect x="1.500" y="1.500" width="13" height="13" fill="none" stroke="#cacaca" stroke-width="1" stroke-dasharray="2 1.500"/><g fill="#cacaca"><rect x="0" y="0" width="3" height="3"/><rect x="13" y="0" width="3" height="3"/><rect x="0" y="13" width="3" height="3"/><rect x="13" y="13" width="3" height="3"/></g><path d="M18 6.500l2.500 2.500 2.500-2.500" fill="none" stroke="#cacaca" stroke-width="1"/></svg>
<div class="a" style="left:1669px;top:303px;width:251px;height:2px;background:#383838"></div>
<div class="a" style="left:1669px;top:304px;width:251px;height:29px;background:#3d3d3d"></div><div class="a" style="left:1721px;top:307px;width:1px;height:26px;background:#363636"></div><div class="a" style="left:1775px;top:307px;width:1px;height:26px;background:#363636"></div><div class="a" style="left:1776px;top:307px;width:49px;height:26px;background:#4b4b4b"></div><div class="a" style="left:1878px;top:307px;width:1px;height:26px;background:#363636"></div><div class="a tab" style="left:1678px;top:312.5px;width:42px;overflow:hidden;color:#c8c8c8">Libraries</div><div class="a tab" style="left:1731px;top:312.5px;width:43px;overflow:hidden;color:#c8c8c8">Swatches</div><svg style="left:1781px;top:315.0px" width="6" height="10"><path d="M1 3.500L3 1.500 5 3.500M1 6.500L3 8.500 5 6.500" fill="none" stroke="#c8c8c8" stroke-width="0.900"/></svg><div class="a tab" style="left:1790px;top:312.5px;width:33px;overflow:hidden;color:#ffffff">Color</div><div class="a tab" style="left:1834px;top:312.5px;width:43px;overflow:hidden;color:#c8c8c8">Properties</div><svg style="left:1902px;top:315.5px" width="11" height="9"><g fill="#bdbdbd"><rect y="0" width="11" height="1.200"/><rect y="2.400" width="11" height="1.200"/><rect y="4.800" width="11" height="1.200"/><rect y="7.200" width="11" height="1.200"/></g></svg>
<div class="a" style="left:1669px;top:333px;width:251px;height:221px;background:#4b4b4b"></div>
<div class="a" style="left:1675px;top:342px;width:13px;height:13px;background:#fff;overflow:hidden"><svg style="left:0;top:0" width="13" height="13"><path d="M0 13L13 0" stroke="#e01010" stroke-width="2"/></svg></div>
<div class="a" style="left:1688px;top:342px;width:13px;height:13px;background:#000"></div>
<div class="a" style="left:1701px;top:342px;width:12px;height:13px;background:#fff"></div>
<div class="a" style="left:1676px;top:366px;width:225.500px;height:182px;background:linear-gradient(to bottom,rgba(255,255,255,1) 0%,rgba(255,255,255,0) 50%,rgba(0,0,0,0) 50%,rgba(0,0,0,1) 100%),linear-gradient(to right,#ff1c1c 0%,#ffee00 16%,#1ec01e 33%,#1ec8f0 50%,#2828b4 66%,#e0108c 84%,#ff1c1c 100%)"></div>
<div class="a" style="left:1669px;top:554px;width:251px;height:2px;background:#383838"></div>
<div class="a" style="left:1669px;top:555px;width:251px;height:28px;background:#3d3d3d"></div><div class="a" style="left:1718px;top:558px;width:1px;height:25px;background:#363636"></div><div class="a" style="left:1719px;top:558px;width:66px;height:25px;background:#4b4b4b"></div><div class="a tab" style="left:1678px;top:563.0px;width:39px;overflow:hidden;color:#c8c8c8">Stroke</div><svg style="left:1724px;top:565.5px" width="6" height="10"><path d="M1 3.500L3 1.500 5 3.500M1 6.500L3 8.500 5 6.500" fill="none" stroke="#c8c8c8" stroke-width="0.900"/></svg><div class="a tab" style="left:1733px;top:563.0px;width:50px;overflow:hidden;color:#ffffff">Gradient</div><svg style="left:1902px;top:566.0px" width="11" height="9"><g fill="#bdbdbd"><rect y="0" width="11" height="1.200"/><rect y="2.400" width="11" height="1.200"/><rect y="4.800" width="11" height="1.200"/><rect y="7.200" width="11" height="1.200"/></g></svg>
<div class="a" style="left:1669px;top:583px;width:251px;height:224px;background:#4b4b4b"></div>
<div class="a" style="left:1675px;top:592px;width:30px;height:30px;background:linear-gradient(90deg,#fff,#222);border:1px solid #333"></div>
<svg style="left:1708px;top:603px" width="7" height="5"><path d="M0.500 0.500h5l-2.500 3z" fill="#ddd"/></svg>
<div class="a pt" style="left:1731px;top:596px;">Type:</div>
<div class="a" style="left:1762px;top:592px;width:152px;height:20px;background:#444;border:1px solid #474747"></div>
<svg style="left:1898px;top:598px" width="10" height="7"><path d="M1 1.500l4 4 4-4" fill="none" stroke="#e6e6e6" stroke-width="1.300"/></svg>
<div class="a" style="left:1686px;top:638px;width:19px;height:19px;background:#fff;border:1px solid #222;overflow:hidden"><div class="a" style="left:4px;top:4px;width:9px;height:9px;background:#4b4b4b;border:1px solid #222"></div><svg style="left:0;top:0" width="19" height="19"><path d="M0 19L19 0" stroke="#e01010" stroke-width="2.200"/></svg></div>
<div class="a" style="left:1675px;top:628px;width:19px;height:19px;background:#a5c6f5;border:1px solid #f0f0f0;outline:1px solid #333"></div>
<div class="a pt" style="left:1724px;top:622px;color:#8a8a8a">Stroke:</div>
<div class="a" style="left:1762px;top:617px;width:66px;height:21px;background:#4f4f4f;border:1px solid #474747"></div>
<svg style="left:1766.0px;top:621px" width="14" height="14"><path d="M1 1h12v6H7v6H1z" fill="#6a6a6a"/></svg>
<svg style="left:1788.5px;top:621px" width="14" height="14"><path d="M1 1h12v6H7v6H1z" fill="#6a6a6a"/></svg>
<svg style="left:1811.0px;top:621px" width="14" height="14"><path d="M1 1h12v6H7v6H1z" fill="#6a6a6a"/></svg>
<svg style="left:1741px;top:645px" width="17" height="14"><path d="M1 13h15M1 13L13 1M9 5c2 2 3 5 3 8" fill="none" stroke="#8a8a8a" stroke-width="1"/></svg>
<div class="a" style="left:1762px;top:644px;width:77px;height:22px;background:#4f4f4f"></div>
<svg style="left:1824px;top:652px" width="9" height="6"><path d="M1 1l3.500 3.500L8 1" fill="none" stroke="#6a6a6a" stroke-width="1"/></svg>
<svg style="left:1740px;top:670px" width="18" height="18"><path d="M2.500 1v15M1 3l1.500-2L4 3M1 14l1.500 2L4 14M6 16.500h11M6 15v3M17 15v3" fill="none" stroke="#8a8a8a" stroke-width="1"/><ellipse cx="11.500" cy="8" rx="5" ry="4" fill="none" stroke="#8a8a8a" stroke-width="1"/></svg>
<div class="a" style="left:1762px;top:670px;width:77px;height:22px;background:#4f4f4f"></div>
<svg style="left:1824px;top:678px" width="9" height="6"><path d="M1 1l3.500 3.500L8 1" fill="none" stroke="#6a6a6a" stroke-width="1"/></svg>
<svg style="left:1682px;top:669px" width="16" height="15"><rect x="1" y="1" width="9" height="5" fill="#6f6f6f"/><rect x="6" y="9" width="9" height="5" fill="#6f6f6f"/><path d="M11 2.500h4l-2 2z M1 11.500h4l-2-2z" fill="#6f6f6f"/></svg>
<div class="a" style="left:1680px;top:704px;width:203px;height:24px;background:linear-gradient(90deg,#fff 0%,#d2d2d2 20%,#a8a8a8 40%,#7e7a7a 55%,#5c5656 70%,#3c3638 85%,#1e1a1c 100%);border:1px solid #333"></div>
<svg style="left:1895px;top:708px" width="13" height="15"><path d="M1 3.500h11M4.500 3.500V1.500h4v2M2.500 3.500l.8 10.500h6.400l.8-10.500M5.200 6v6M7.800 6v6" fill="none" stroke="#6e6e6e" stroke-width="1"/></svg>
<div class="a pt" style="left:1718px;top:759px;color:#8a8a8a">Opacity:</div>
<div class="a" style="left:1762px;top:755px;width:77px;height:22px;background:#4f4f4f"></div>
<svg style="left:1824px;top:763px" width="9" height="6"><path d="M1 1l3.500 3.500L8 1" fill="none" stroke="#6a6a6a" stroke-width="1"/></svg>
<div class="a pt" style="left:1713px;top:785px;color:#8a8a8a">Location:</div>
<div class="a" style="left:1762px;top:781px;width:77px;height:22px;background:#4f4f4f"></div>
<svg style="left:1824px;top:789px" width="9" height="6"><path d="M1 1l3.500 3.500L8 1" fill="none" stroke="#6a6a6a" stroke-width="1"/></svg>
<div class="a" style="left:1669px;top:807px;width:251px;height:3px;background:#383838"></div>
<div class="a" style="left:1669px;top:809px;width:251px;height:28px;background:#3d3d3d"></div><div class="a" style="left:1669px;top:812px;width:69px;height:25px;background:#4b4b4b"></div><div class="a" style="left:1814px;top:812px;width:1px;height:25px;background:#363636"></div><div class="a tab" style="left:1678px;top:817.0px;width:58px;overflow:hidden;color:#ffffff">Pathfinder</div><div class="a tab" style="left:1747px;top:817.0px;width:66px;overflow:hidden;color:#c8c8c8">Appearance</div><svg style="left:1902px;top:820.0px" width="11" height="9"><g fill="#bdbdbd"><rect y="0" width="11" height="1.200"/><rect y="2.400" width="11" height="1.200"/><rect y="4.800" width="11" height="1.200"/><rect y="7.200" width="11" height="1.200"/></g></svg>
<div class="a" style="left:1669px;top:837px;width:251px;height:107px;background:#4b4b4b"></div>
<div class="a pt" style="left:1674px;top:844px;">Shape Modes:</div>
<div class="a pt" style="left:1674px;top:895px;">Pathfinders:</div>
<svg style="left:1680px;top:869px" width="15" height="15"><rect x="0.500" y="0.500" width="9" height="9" fill="#cacaca"/><rect x="4.500" y="4.500" width="9" height="9" fill="#cacaca"/></svg>
<svg style="left:1718px;top:869px" width="15" height="15"><rect x="0.500" y="0.500" width="9" height="9" fill="#cacaca"/><rect x="4.500" y="4.500" width="9" height="9" fill="#4b4b4b" stroke="#cacaca" stroke-width="1.300"/></svg>
<svg style="left:1756px;top:869px" width="15" height="15"><rect x="0.500" y="0.500" width="9" height="9" fill="none" stroke="#cacaca" stroke-width="1.300"/><rect x="4.500" y="4.500" width="9" height="9" fill="none" stroke="#cacaca" stroke-width="1.300"/><rect x="4.500" y="4.500" width="5" height="5" fill="#cacaca"/></svg>
<svg style="left:1794px;top:869px" width="15" height="15"><rect x="0.500" y="0.500" width="9" height="9" fill="#cacaca"/><rect x="4.500" y="4.500" width="9" height="9" fill="#cacaca"/><rect x="4.500" y="4.500" width="5" height="5" fill="#4b4b4b"/></svg>
<div class="a" style="left:1826px;top:866px;width:78px;height:19px;background:#4f4f4f;border-radius:2px"></div>
<div class="a pt" style="left:1826px;top:869px;width:78px;text-align:center;color:#7a7a7a">Expand</div>
<svg style="left:1684px;top:920px" width="15" height="15"><rect x="0.500" y="0.500" width="9" height="9" fill="none" stroke="#cacaca" stroke-width="1.300"/><rect x="4.500" y="4.500" width="9" height="9" fill="#cacaca" fill-opacity=".6" stroke="#cacaca" stroke-width="1.300"/></svg>
<svg style="left:1723px;top:920px" width="15" height="15"><rect x="0.500" y="0.500" width="9" height="9" fill="#cacaca"/><rect x="4.500" y="4.500" width="9" height="9" fill="#cacaca" stroke="#4b4b4b" stroke-width="1"/></svg>
<svg style="left:1762px;top:920px" width="15" height="15"><rect x="0.500" y="0.500" width="9" height="9" fill="#cacaca"/><rect x="4.500" y="4.500" width="9" height="9" fill="#cacaca"/></svg>
<svg style="left:1801px;top:920px" width="15" height="15"><rect x="0.500" y="0.500" width="9" height="9" fill="none" stroke="#cacaca" stroke-width="1.300"/><rect x="4.500" y="4.500" width="9" height="9" fill="none" stroke="#cacaca" stroke-width="1.300"/></svg>
<svg style="left:1840px;top:920px" width="15" height="15"><rect x="0.500" y="0.500" width="9" height="9" fill="none" stroke="#cacaca" stroke-width="1.300"/><rect x="4.500" y="4.500" width="9" height="9" fill="none" stroke="#cacaca" stroke-width="1.300"/></svg>
<svg style="left:1879px;top:920px" width="15" height="15"><rect x="0.500" y="0.500" width="9" height="9" fill="none" stroke="#cacaca" stroke-width="1.300"/><rect x="4.500" y="4.500" width="9" height="9" fill="#cacaca"/></svg>
<div class="a" style="left:1669px;top:944px;width:251px;height:2px;background:#383838"></div>
<div class="a" style="left:1669px;top:945px;width:251px;height:29px;background:#3d3d3d"></div><div class="a" style="left:1737px;top:948px;width:1px;height:26px;background:#363636"></div><div class="a" style="left:1738px;top:948px;width:50px;height:26px;background:#4b4b4b"></div><div class="a tab" style="left:1678px;top:953.5px;width:58px;overflow:hidden;color:#c8c8c8">Artboards</div><div class="a tab" style="left:1747px;top:953.5px;width:39px;overflow:hidden;color:#ffffff">Layers</div><svg style="left:1902px;top:956.5px" width="11" height="9"><g fill="#bdbdbd"><rect y="0" width="11" height="1.200"/><rect y="2.400" width="11" height="1.200"/><rect y="4.800" width="11" height="1.200"/><rect y="7.200" width="11" height="1.200"/></g></svg>
<div class="a" style="left:1669px;top:974px;width:251px;height:226px;background:#4b4b4b"></div>
<div class="a" style="left:1674px;top:980px;width:239px;height:199px;background:#4a4a4a;border:1px solid #444"></div>
<div class="a" style="left:1675px;top:1001px;width:237px;height:1px;background:#424242"></div>
<div class="a" style="left:1696px;top:981px;width:1px;height:21px;background:#444"></div>
<div class="a" style="left:1876px;top:981px;width:1px;height:21px;background:#444"></div>
<div class="a" style="left:1718px;top:982px;width:3px;height:19px;background:#f2f23c"></div>
<svg style="left:1729px;top:987px" width="6" height="10"><path d="M1 1l3.500 4L1 9" fill="none" stroke="#e0e0e0" stroke-width="1.200"/></svg>
<div class="a" style="left:1747px;top:982.5px;width:18px;height:18px;background:#fff;border:1px solid #111"></div>
<div class="a pt" style="left:1770px;top:985px;color:#ececec">Layer 7</div>
<svg style="left:1883px;top:987px" width="10" height="10"><circle cx="5" cy="5" r="4" fill="none" stroke="#d8d8d8" stroke-width="1.100"/></svg>
<div class="a" style="left:1675px;top:1022px;width:237px;height:1px;background:#424242"></div>
<div class="a" style="left:1696px;top:1002px;width:1px;height:21px;background:#444"></div>
<div class="a" style="left:1876px;top:1002px;width:1px;height:21px;background:#444"></div>
<svg style="left:1678px;top:1008px" width="13" height="9"><path d="M0.300 4.500C3 0 10 0 12.700 4.500 10 9 3 9 0.300 4.500z" fill="#dcdcdc"/><circle cx="6.500" cy="4.500" r="2.600" fill="#4a4a4a"/><circle cx="6.500" cy="4.500" r="1.300" fill="#dcdcdc"/></svg>
<div class="a" style="left:1718px;top:1003px;width:3px;height:19px;background:#808080"></div>
<svg style="left:1729px;top:1008px" width="6" height="10"><path d="M1 1l3.500 4L1 9" fill="none" stroke="#e0e0e0" stroke-width="1.200"/></svg>
<div class="a" style="left:1747px;top:1003.5px;width:18px;height:18px;background:#fff;border:1px solid #111"></div>
<div class="a pt" style="left:1770px;top:1006px;color:#ececec">Layer 8</div>
<svg style="left:1883px;top:1008px" width="10" height="10"><circle cx="5" cy="5" r="4" fill="none" stroke="#d8d8d8" stroke-width="1.100"/></svg>
<div class="a" style="left:1675px;top:1043px;width:237px;height:1px;background:#424242"></div>
<div class="a" style="left:1696px;top:1023px;width:1px;height:21px;background:#444"></div>
<div class="a" style="left:1876px;top:1023px;width:1px;height:21px;background:#444"></div>
<svg style="left:1678px;top:1029px" width="13" height="9"><path d="M0.300 4.500C3 0 10 0 12.700 4.500 10 9 3 9 0.300 4.500z" fill="#dcdcdc"/><circle cx="6.500" cy="4.500" r="2.600" fill="#4a4a4a"/><circle cx="6.500" cy="4.500" r="1.300" fill="#dcdcdc"/></svg>
<div class="a" style="left:1718px;top:1024px;width:3px;height:19px;background:#1b4d1b"></div>
<svg style="left:1729px;top:1029px" width="6" height="10"><path d="M1 1l3.500 4L1 9" fill="none" stroke="#e0e0e0" stroke-width="1.200"/></svg>
<div class="a" style="left:1747px;top:1024.5px;width:18px;height:18px;background:#fff;border:1px solid #111"></div>
<div class="a pt" style="left:1770px;top:1027px;color:#ececec">Layer 11</div>
<svg style="left:1883px;top:1029px" width="10" height="10"><circle cx="5" cy="5" r="4" fill="none" stroke="#d8d8d8" stroke-width="1.100"/></svg>
<div class="a" style="left:1675px;top:1064px;width:237px;height:1px;background:#424242"></div>
<div class="a" style="left:1696px;top:1044px;width:1px;height:21px;background:#444"></div>
<div class="a" style="left:1876px;top:1044px;width:1px;height:21px;background:#444"></div>
<svg style="left:1678px;top:1050px" width="13" height="9"><path d="M0.300 4.500C3 0 10 0 12.700 4.500 10 9 3 9 0.300 4.500z" fill="#dcdcdc"/><circle cx="6.500" cy="4.500" r="2.600" fill="#4a4a4a"/><circle cx="6.500" cy="4.500" r="1.300" fill="#dcdcdc"/></svg>
<div class="a" style="left:1718px;top:1045px;width:3px;height:19px;background:#f06a10"></div>
<svg style="left:1729px;top:1050px" width="6" height="10"><path d="M1 1l3.500 4L1 9" fill="none" stroke="#e0e0e0" stroke-width="1.200"/></svg>
<div class="a" style="left:1747px;top:1045.5px;width:18px;height:18px;background:#fff;border:1px solid #111"></div>
<div class="a pt" style="left:1770px;top:1048px;color:#ececec">Layer 10</div>
<svg style="left:1883px;top:1050px" width="10" height="10"><circle cx="5" cy="5" r="4" fill="none" stroke="#d8d8d8" stroke-width="1.100"/></svg>
<div class="a" style="left:1675px;top:1085px;width:237px;height:1px;background:#424242"></div>
<div class="a" style="left:1696px;top:1065px;width:1px;height:21px;background:#444"></div>
<div class="a" style="left:1876px;top:1065px;width:1px;height:21px;background:#444"></div>
<svg style="left:1678px;top:1071px" width="13" height="9"><path d="M0.300 4.500C3 0 10 0 12.700 4.500 10 9 3 9 0.300 4.500z" fill="#dcdcdc"/><circle cx="6.500" cy="4.500" r="2.600" fill="#4a4a4a"/><circle cx="6.500" cy="4.500" r="1.300" fill="#dcdcdc"/></svg>
<div class="a" style="left:1718px;top:1066px;width:3px;height:19px;background:#000"></div>
<svg style="left:1729px;top:1071px" width="6" height="10"><path d="M1 1l3.500 4L1 9" fill="none" stroke="#e0e0e0" stroke-width="1.200"/></svg>
<div class="a" style="left:1747px;top:1066.5px;width:18px;height:18px;background:#fff;border:1px solid #111"></div>
<div class="a pt" style="left:1770px;top:1069px;color:#ececec">Layer 9</div>
<svg style="left:1883px;top:1071px" width="10" height="10"><circle cx="5" cy="5" r="4" fill="none" stroke="#d8d8d8" stroke-width="1.100"/></svg>
<div class="a" style="left:1675px;top:1086px;width:237px;height:21px;background:#4a6688"></div>
<svg style="left:1904px;top:1087px" width="8" height="8"><path d="M0 0h8v8z" fill="#e8e8e8"/></svg>
<div class="a" style="left:1675px;top:1106px;width:237px;height:1px;background:#424242"></div>
<div class="a" style="left:1696px;top:1086px;width:1px;height:21px;background:#444"></div>
<div class="a" style="left:1876px;top:1086px;width:1px;height:21px;background:#444"></div>
<svg style="left:1678px;top:1092px" width="13" height="9"><path d="M0.300 4.500C3 0 10 0 12.700 4.500 10 9 3 9 0.300 4.500z" fill="#dcdcdc"/><circle cx="6.500" cy="4.500" r="2.600" fill="#4a4a4a"/><circle cx="6.500" cy="4.500" r="1.300" fill="#dcdcdc"/></svg>
<div class="a" style="left:1718px;top:1087px;width:3px;height:19px;background:#7a7a7a"></div>
<svg style="left:1729px;top:1092px" width="6" height="10"><path d="M1 1l3.500 4L1 9" fill="none" stroke="#e0e0e0" stroke-width="1.200"/></svg>
<div class="a" style="left:1747px;top:1087.5px;width:18px;height:18px;background:#fff;border:1px solid #111"></div>
<div class="a pt" style="left:1770px;top:1090px;color:#ececec">Layer 13</div>
<svg style="left:1883px;top:1092px" width="10" height="10"><circle cx="5" cy="5" r="4" fill="none" stroke="#d8d8d8" stroke-width="1.100"/></svg>
<div class="a" style="left:1675px;top:1127px;width:237px;height:1px;background:#424242"></div>
<div class="a" style="left:1696px;top:1107px;width:1px;height:21px;background:#444"></div>
<div class="a" style="left:1876px;top:1107px;width:1px;height:21px;background:#444"></div>
<svg style="left:1678px;top:1113px" width="13" height="9"><path d="M0.300 4.500C3 0 10 0 12.700 4.500 10 9 3 9 0.300 4.500z" fill="#dcdcdc"/><circle cx="6.500" cy="4.500" r="2.600" fill="#4a4a4a"/><circle cx="6.500" cy="4.500" r="1.300" fill="#dcdcdc"/></svg>
<div class="a" style="left:1718px;top:1108px;width:3px;height:19px;background:#7a7a7a"></div>
<svg style="left:1729px;top:1113px" width="6" height="10"><path d="M1 1l3.500 4L1 9" fill="none" stroke="#e0e0e0" stroke-width="1.200"/></svg>
<div class="a" style="left:1747px;top:1108.5px;width:18px;height:18px;background:#fff;border:1px solid #111"></div>
<div class="a pt" style="left:1770px;top:1111px;color:#ececec">Layer 12</div>
<svg style="left:1883px;top:1113px" width="10" height="10"><circle cx="5" cy="5" r="4" fill="none" stroke="#d8d8d8" stroke-width="1.100"/></svg>
<div class="a" style="left:1675px;top:1148px;width:237px;height:1px;background:#424242"></div>
<div class="a" style="left:1696px;top:1128px;width:1px;height:21px;background:#444"></div>
<div class="a" style="left:1876px;top:1128px;width:1px;height:21px;background:#444"></div>
<svg style="left:1701px;top:1133px" width="10" height="12"><path d="M2.500 5.500V3.500a2.500 2.500 0 0 1 5 0v2" fill="none" stroke="#d0d0d0" stroke-width="1.300"/><rect x="1" y="5.500" width="8" height="6" fill="#d0d0d0"/><rect x="4.500" y="7.500" width="1" height="2" fill="#555"/></svg>
<div class="a" style="left:1718px;top:1129px;width:3px;height:19px;background:#4a80f0"></div>
<svg style="left:1729px;top:1134px" width="6" height="10"><path d="M1 1l3.500 4L1 9" fill="none" stroke="#e0e0e0" stroke-width="1.200"/></svg>
<div class="a" style="left:1747px;top:1129.5px;width:18px;height:18px;background:#fff;border:1px solid #111"></div>
<div class="a pt" style="left:1770px;top:1132px;color:#ececec">Background</div>
<svg style="left:1883px;top:1134px" width="10" height="10"><circle cx="5" cy="5" r="4" fill="none" stroke="#d8d8d8" stroke-width="1.100"/></svg>
<svg style="left:1748px;top:983px" width="16" height="16"><path d="M3 6h10l-1 4H4z" fill="none" stroke="#e06060" stroke-width="1.500"/><path d="M2 8h12" stroke="#e06060" stroke-width="1.200"/></svg>
<svg style="left:1748px;top:1004px" width="16" height="16"><path d="M8 1c-3 2-4 6-3 9l-2 2h10l-2-2c1-3 0-7-3-9z" fill="#222"/><ellipse cx="8" cy="9" rx="2" ry="3" fill="#fff"/><path d="M7 14l1 2 1-2z" fill="#222"/></svg>
<svg style="left:1748px;top:1046px" width="16" height="16"><circle cx="8" cy="8" r="7.500" fill="#e0a33b"/><path d="M8 0v16M0 8h16M3 1c3 3 3 11 0 14M13 1c-3 3-3 11 0 14" stroke="#fff" stroke-width="1.300" fill="none"/></svg>
<svg style="left:1748px;top:1067px" width="16" height="16"><path d="M8 1c-2 3-3 6-3 10l-3 3h12l-3-3c0-4-1-7-3-10z" fill="#c41e26"/></svg>
<svg style="left:1748px;top:1088px" width="16" height="16"><path d="M2 2c2 4 2 9 1 14M5 5c1 3 1 7 1 11M11 5c-1 3-1 7-1 11M14 2c-2 4-2 9-1 14" stroke="#90b8f0" stroke-width="1.400" fill="none"/></svg>
<svg style="left:1748px;top:1109px" width="16" height="16"><circle cx="8" cy="8" r="7" fill="#3b2db8"/></svg>
<div class="a pt" style="left:1674px;top:1183px;color:#e0e0e0">8 Layers</div>
<svg style="left:1749px;top:1182px" width="14" height="14"><path d="M6 2.500H1.500v10h10V8" fill="none" stroke="#c8c8c8" stroke-width="1.200"/><path d="M6 8L12.500 1.500M9 1h4v4" fill="none" stroke="#c8c8c8" stroke-width="1.200"/></svg>
<svg style="left:1775px;top:1182px" width="14" height="14"><circle cx="8.500" cy="5.500" r="4" fill="none" stroke="#777" stroke-width="1.200"/><path d="M5.500 8.500L1 13" stroke="#777" stroke-width="1.300"/></svg>
<svg style="left:1800px;top:1182px" width="14" height="14"><rect x="1" y="1" width="8" height="8" fill="none" stroke="#c8c8c8" stroke-width="1.200"/><rect x="5" y="5" width="8" height="8" fill="none" stroke="#c8c8c8" stroke-width="1.200"/><rect x="4" y="4" width="4" height="4" fill="#c8c8c8"/></svg>
<svg style="left:1826px;top:1182px" width="14" height="14"><path d="M6 3h7v10H9V9H6z" fill="#c8c8c8"/><path d="M1 5h5M3 3L1 5l2 2M2 1v4" fill="none" stroke="#c8c8c8" stroke-width="1.100"/></svg>
<svg style="left:1853px;top:1182px" width="14" height="14"><path d="M4 2h9v11H8V8H4z" fill="#c8c8c8"/></svg>
<svg style="left:1879px;top:1181px" width="13" height="15"><path d="M1 3.500h11M4.500 3.500V1.500h4v2M2.500 3.500l1 10.500h6l1-10.500M5 6v6M8 6v6" fill="none" stroke="#c8c8c8" stroke-width="1.100"/></svg><div class="a" style="left:42px;top:1182px;width:1584px;height:17px;background:#474747"></div>
<div class="a" style="left:42px;top:1182px;width:1568px;height:1px;background:#3a3a3a"></div>
<div class="a" style="left:44px;top:1184px;width:52px;height:15px;background:#414141"></div>
<div class="a sb" style="left:49px">50%</div>
<div class="a" style="left:96px;top:1184px;width:17px;height:15px;background:#444"></div>
<svg style="left:100px;top:1189px" width="9" height="6"><path d="M1 1l3.500 3.500L8 1" fill="none" stroke="#e0e0e0" stroke-width="1.200"/></svg>
<svg style="left:121px;top:1186px" width="30" height="10"><path d="M1 1v8M8 1L3 5l5 4z" fill="#777" stroke="#777" stroke-width="1"/><path d="M24 1l-5 4 5 4z" fill="#777"/></svg>
<div class="a" style="left:155px;top:1184px;width:41px;height:15px;background:#414141"></div>
<div class="a sb" style="left:159px;color:#f0f0f0">1</div>
<div class="a" style="left:196px;top:1184px;width:17px;height:15px;background:#444"></div>
<svg style="left:200px;top:1189px" width="9" height="6"><path d="M1 1l3.500 3.500L8 1" fill="none" stroke="#e0e0e0" stroke-width="1.200"/></svg>
<svg style="left:222px;top:1186px" width="30" height="10"><path d="M1 1l5 4-5 4z" fill="#777"/><path d="M17 1l5 4-5 4zM24 1v8" fill="#777" stroke="#777" stroke-width="1"/></svg>
<div class="a" style="left:255px;top:1184px;width:202px;height:15px;background:#444"></div>
<div class="a sb" style="left:255px;width:202px;text-align:center;color:#e8e8e8">Selection</div>
<svg style="left:462px;top:1186px" width="7" height="10"><path d="M1 1l5 4-5 4z" fill="#e0e0e0"/></svg>
<svg style="left:479px;top:1186px" width="6" height="10"><path d="M5 1L1.500 5 5 9" fill="none" stroke="#aaa" stroke-width="1"/></svg>
<div class="a" style="left:1028px;top:1185px;width:25px;height:13px;background:#555;border-radius:7px"></div>
<svg style="left:1598px;top:1186px" width="6" height="10"><path d="M1 1l3.500 4L1 9" fill="none" stroke="#ccc" stroke-width="1.100"/></svg>
<div class="a" style="left:1610px;top:1182px;width:16px;height:17px;background:#4a4a4a"></div><div class="a" style="left:0px;top:1199px;width:1920px;height:60px;background:#000"></div>
<div class="a tb" style="left:0px;width:113px;background:#393939">esc</div>
<div class="a tb" style="left:269px;width:127px;background:#393939">New</div>
<div class="a tb" style="left:411px;width:127px;background:#393939">Open</div>
<div class="a tb" style="left:552px;width:127px;background:#393939">Place</div>
<div class="a" style="left:694px;top:1203px;width:360px;height:52px;background:#393939;border-radius:8px"></div>
<div class="a" style="left:697px;top:1203px;width:119px;height:52px;background:#8a8a8a;border-radius:8px"></div>
<div class="a" style="left:936px;top:1203px;width:115px;height:52px;background:#8a8a8a;border-radius:8px"></div>
<div class="a" style="left:817px;top:1205px;width:2px;height:48px;background:#2e2e2e"></div>
<div class="a" style="left:932px;top:1205px;width:2px;height:48px;background:#2e2e2e"></div>
<svg style="left:743px;top:1214px" width="34" height="32"><path d="M1.500 2h31v6h-24v23h-7z" fill="#ffffff"/><g fill="#8a8a8a"><rect x="12" y="3.500" width="2" height="3"/><rect x="17" y="3.500" width="2" height="3"/><rect x="22" y="3.500" width="2" height="3"/><rect x="27" y="3.500" width="2" height="3"/><rect x="3" y="12" width="3" height="2"/><rect x="3" y="17" width="3" height="2"/><rect x="3" y="22" width="3" height="2"/><rect x="3" y="27" width="3" height="2"/></g></svg>
<svg style="left:859px;top:1215px" width="33" height="28"><rect x="1.500" y="1.500" width="30" height="25" fill="none" stroke="#ffffff" stroke-width="3"/><path d="M11.500 1.500v25M21.500 1.500v25M1.500 9.800h30M1.500 18.200h30" stroke="#ffffff" stroke-width="3"/></svg>
<svg style="left:973px;top:1213px" width="34" height="34"><path d="M7 0v34M12.500 0v34M1 9.500h32M1 24.500h32" stroke="#ffffff" stroke-width="2.500"/></svg>
<div class="a" style="left:1069px;top:1203px;width:127px;height:52px;background:#393939;border-radius:8px"></div>
<svg style="left:1114px;top:1212px" width="40" height="34"><path d="M12 1v10M8 5.500h4" stroke="#ffffff" stroke-width="2.500"/><path d="M11.500 10v23h26v-18l-5-5z" fill="none" stroke="#ffffff" stroke-width="3"/><path d="M0 5.500h8" stroke="#ffffff" stroke-width="2.500"/></svg>
<svg style="left:1175px;top:1216px" width="10" height="26"><path d="M2 1.500l6 11.500-6 11.500" fill="none" stroke="#9a9a9a" stroke-width="2.200"/></svg>
<div class="a" style="left:1227px;top:1203px;width:126px;height:52px;background:#393939;border-radius:8px"></div>
<svg style="left:1270px;top:1213px" width="40" height="34"><rect x="9" y="1" width="22" height="24" fill="#ffffff"/><rect x="2" y="5" width="4.500" height="16" fill="#ffffff"/><rect x="33.500" y="5" width="4.500" height="16" fill="#ffffff"/><circle cx="12" cy="30" r="2" fill="#ffffff"/><circle cx="17" cy="30" r="2.500" fill="#ffffff"/><circle cx="23" cy="30" r="2" fill="#ffffff"/><circle cx="28" cy="30" r="2" fill="#ffffff"/></svg>
<svg style="left:1332px;top:1216px" width="10" height="26"><path d="M2 1.500l6 11.500-6 11.500" fill="none" stroke="#9a9a9a" stroke-width="2.200"/></svg>
<div class="a" style="left:1382px;top:1203px;width:540px;height:52px;background:#393939;border-radius:8px"></div>
<div class="a" style="left:1409px;top:1203px;width:2px;height:52px;background:#2c2c2c"></div>
<div class="a" style="left:1537px;top:1203px;width:2px;height:52px;background:#2c2c2c"></div>
<div class="a" style="left:1664px;top:1203px;width:2px;height:52px;background:#2c2c2c"></div>
<div class="a" style="left:1792px;top:1203px;width:2px;height:52px;background:#2c2c2c"></div>
<svg style="left:1388px;top:1212px" width="16" height="34"><path d="M12 2L4 17l8 15" fill="none" stroke="#ffffff" stroke-width="3"/></svg>
<svg style="left:1460px;top:1215px" width="28" height="28"><circle cx="14" cy="14" r="6.500" fill="#ffffff"/><rect x="12.500" y="0.500" width="3" height="5" rx="1.500" fill="#ffffff" transform="rotate(0 14 14)"/><rect x="12.500" y="0.500" width="3" height="5" rx="1.500" fill="#ffffff" transform="rotate(45 14 14)"/><rect x="12.500" y="0.500" width="3" height="5" rx="1.500" fill="#ffffff" transform="rotate(90 14 14)"/><rect x="12.500" y="0.500" width="3" height="5" rx="1.500" fill="#ffffff" transform="rotate(135 14 14)"/><rect x="12.500" y="0.500" width="3" height="5" rx="1.500" fill="#ffffff" transform="rotate(180 14 14)"/><rect x="12.500" y="0.500" width="3" height="5" rx="1.500" fill="#ffffff" transform="rotate(225 14 14)"/><rect x="12.500" y="0.500" width="3" height="5" rx="1.500" fill="#ffffff" transform="rotate(270 14 14)"/><rect x="12.500" y="0.500" width="3" height="5" rx="1.500" fill="#ffffff" transform="rotate(315 14 14)"/></svg>
<svg style="left:1580px;top:1212px" width="46" height="34"><path d="M2 11h7l10-8v28l-10-8H2z" fill="#ffffff"/><path d="M23 12a7 7 0 0 1 0 10M28 8a13 13 0 0 1 0 18" fill="none" stroke="#ffffff" stroke-width="2.500"/><path d="M33.500 3a20 20 0 0 1 0 28" fill="none" stroke="#8e8e8e" stroke-width="2"/></svg>
<svg style="left:1705px;top:1210px" width="46" height="38"><path d="M2 13h7l10-8v28l-10-8H2z" fill="#ffffff"/><path d="M23 14a7 7 0 0 1 0 10M28 10a13 13 0 0 1 0 18M33.500 5a20 20 0 0 1 0 28" fill="none" stroke="#ffffff" stroke-width="2.500"/><path d="M2 1l36 34" stroke="#393939" stroke-width="5"/><path d="M3 2l35 33" stroke="#ffffff" stroke-width="2.500"/></svg>
<svg style="left:1836px;top:1209px" width="40" height="40"><defs><radialGradient id="siri2" cx="50%" cy="50%" r="50%"><stop offset="0" stop-color="#ffffff"/><stop offset=".18" stop-color="#d8e8ff"/><stop offset=".45" stop-color="#4a5aa8"/><stop offset=".8" stop-color="#1c2358"/><stop offset="1" stop-color="#111530"/></radialGradient><filter id="bl" x="-50%" y="-50%" width="200%" height="200%"><feGaussianBlur stdDeviation="1.200"/></filter></defs><circle cx="20" cy="20" r="18.500" fill="url(#siri2)" stroke="#f2f2f2" stroke-width="1.800"/><g filter="url(#bl)"><path d="M20 20L9 12 12 10z" fill="#ff4fa8" opacity=".85"/><path d="M20 20L31 26 28 29z" fill="#ff4fa8" opacity=".7"/><path d="M20 20L30 11 32 14z" fill="#4fe8e0" opacity=".85"/><path d="M20 20L10 28 8 25z" fill="#4fe8e0" opacity=".7"/><path d="M20 20L21 7 24 8z" fill="#a070ff" opacity=".7"/><path d="M20 20L18 33 15 32z" fill="#a070ff" opacity=".6"/><circle cx="20" cy="20" r="3.500" fill="#fff"/></g></svg>
</body></html>
